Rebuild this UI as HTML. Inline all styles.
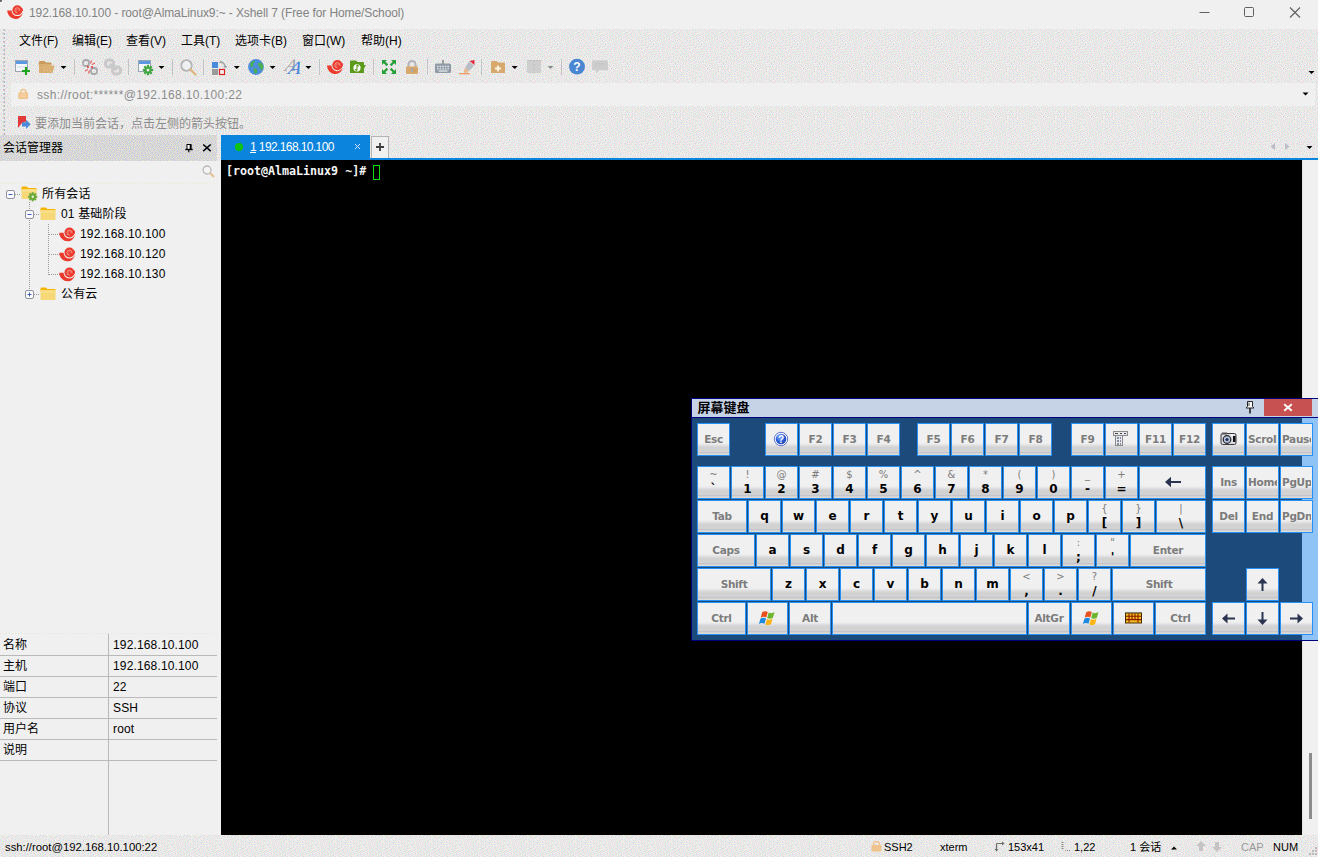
<!DOCTYPE html>
<html lang="zh-CN"><head><meta charset="utf-8"><title>Xshell 7</title>
<style>
*{box-sizing:border-box;margin:0;padding:0}
html,body{width:1318px;height:857px;overflow:hidden;background:#e9eaed}
body{position:relative;font-family:"Liberation Sans","Noto Sans CJK SC",sans-serif;font-size:12px;color:#000}
.abs{position:absolute}
.t{position:absolute;white-space:nowrap;line-height:1}

#titlebar{left:0;top:0;width:1318px;height:29px;background:#f0f0f0}
#title{left:29px;top:7px;font-size:12px;color:#838383;letter-spacing:-.1px}
.menu{top:35px;font-size:12px;color:#000}
#addr{left:11px;top:83px;width:1304px;height:23px;background:#f0f0f0}
#addrtext{left:37px;top:89px;font-size:12px;color:#8c8c8c;letter-spacing:.35px}
#hint{left:35px;top:117.500px;font-size:12px;color:#8c8c8c}

#smtitle{left:3px;top:142px;font-size:12px}
#smbody{left:0;top:161px;width:221px;height:674px;background:#f0f0f0}
.tree{font-size:12px;color:#000;letter-spacing:.15px}

.pl{background:#b9b9b9}
.pk{left:3px;font-size:12px}
.pv{left:113px;font-size:12px;letter-spacing:.15px}

#tab{left:221px;top:135px;width:149px;height:24px;background:#0b84dd}
#tabtxt{left:250px;top:141px;font-size:12px;color:#fff;letter-spacing:-.6px}
#tabline{left:221px;top:158px;width:1097px;height:2px;background:#0b84dd}
#plus{left:371px;top:136px;width:18px;height:22px;background:#f0f0f0;border:1px solid #b4b4b4;border-bottom:none}
#term{left:221px;top:160px;width:1081px;height:675px;background:#000}
#scroll{left:1302px;top:160px;width:16px;height:675px;background:#f0f0f0;border-left:1px solid #e2e2e2}
#prompt{left:226px;top:166.200px;font-family:"DejaVu Sans Mono","Liberation Mono",monospace;font-weight:bold;font-size:11.650px;color:#f6f6f6}
#cursor{left:373px;top:165px;width:7px;height:15px;border:1px solid #10de10}

.st{top:842px;font-size:11px;color:#000}

#kb{left:691px;top:398px;width:640px;height:243px;background:#1c4a7b;border:1px solid #00007c}
#kblight{left:1302px;top:418px;width:16px;height:222px;background:#8fc3f5}
#kbtitle{left:692px;top:399px;width:626px;height:18px;background:#c6d3e6}
#kbtline{left:692px;top:417px;width:626px;height:1px;background:#00007c}
#kbname{left:697.500px;top:401px;font-size:13px;font-weight:bold;color:#000;font-family:"Liberation Sans","Noto Sans CJK SC",sans-serif}
#kbclose{left:1264px;top:399px;width:48px;height:17px;background:#c75050}
.k{position:absolute;height:33px;border:1px solid #2590f6;background:linear-gradient(#f0f0f0 0,#f0f0f0 19px,#e7e7e9 20.500px,#dbdbdd 22px,#d2d2d2 23.500px,#d2d2d2 28px,#c4c4cc 28px,#c4c4cc 29px,#d2d2d2 29px,#d2d2d2 30px,#dedcd6 30px);font-family:"DejaVu Sans","Liberation Sans",sans-serif;text-align:center;overflow:hidden;white-space:nowrap}
.k b{position:absolute;left:0;right:0;top:0;height:31px;line-height:31px;font-size:12px;font-weight:bold;color:#000}
.k i{position:absolute;left:0;right:0;top:0;letter-spacing:-.3px;height:31px;line-height:31px;font-size:10.500px;font-weight:bold;font-style:normal;color:#7c7c7c}
.k i.l{text-align:left;left:1px;right:auto;width:29px;overflow:hidden}
.k s{position:absolute;left:0;right:0;top:1.5px;height:12px;line-height:12px;font-size:10px;text-decoration:none;color:#7c7c7c}
.k u{position:absolute;left:0;right:0;top:14.6px;height:14px;line-height:14px;font-size:12px;font-weight:bold;text-decoration:none;color:#000}
.k svg{position:absolute;left:0;top:0}
</style></head>
<body>
<svg class="abs" style="left:0;top:0" width="1318" height="857" shape-rendering="crispEdges">
<defs><pattern id="dz" width="48" height="48" patternUnits="userSpaceOnUse"><rect width="48" height="48" fill="#f0f0f0"/><path d="M5 0h1v1h-1zM11 0h1v1h-1zM17 0h1v1h-1zM30 0h1v1h-1zM21 1h1v1h-1zM37 1h1v1h-1zM46 1h1v1h-1zM20 2h1v1h-1zM29 2h1v1h-1zM42 2h1v1h-1zM38 3h1v1h-1zM28 4h1v1h-1zM39 5h1v1h-1zM43 5h1v1h-1zM8 7h1v1h-1zM1 8h1v1h-1zM10 8h1v1h-1zM14 8h1v1h-1zM17 8h1v1h-1zM36 8h1v1h-1zM7 9h1v1h-1zM23 9h1v1h-1zM42 9h1v1h-1zM9 10h1v1h-1zM25 10h1v1h-1zM27 10h1v1h-1zM16 11h1v1h-1zM41 11h1v1h-1zM21 12h1v1h-1zM39 12h1v1h-1zM16 13h1v1h-1zM19 13h1v1h-1zM28 13h1v1h-1zM31 13h1v1h-1zM37 13h1v1h-1zM2 14h1v1h-1zM46 14h1v1h-1zM3 15h1v1h-1zM38 15h1v1h-1zM1 16h1v1h-1zM5 16h1v1h-1zM43 16h1v1h-1zM8 17h1v1h-1zM23 17h1v1h-1zM33 17h1v1h-1zM37 17h1v1h-1zM4 18h1v1h-1zM17 19h1v1h-1zM40 19h1v1h-1zM35 20h1v1h-1zM39 20h1v1h-1zM37 21h1v1h-1zM46 21h1v1h-1zM11 22h1v1h-1zM13 22h1v1h-1zM17 22h1v1h-1zM29 22h1v1h-1zM43 22h1v1h-1zM15 23h1v1h-1zM33 23h1v1h-1zM46 23h1v1h-1zM35 24h1v1h-1zM37 25h1v1h-1zM12 26h1v1h-1zM43 26h1v1h-1zM1 27h1v1h-1zM9 27h1v1h-1zM38 27h1v1h-1zM46 27h1v1h-1zM5 28h1v1h-1zM11 28h1v1h-1zM30 28h1v1h-1zM34 28h1v1h-1zM20 29h1v1h-1zM28 29h1v1h-1zM17 30h1v1h-1zM23 30h1v1h-1zM41 30h1v1h-1zM15 31h1v1h-1zM2 32h1v1h-1zM23 32h1v1h-1zM0 33h1v1h-1zM31 33h1v1h-1zM36 33h1v1h-1zM9 34h1v1h-1zM16 34h1v1h-1zM33 34h1v1h-1zM20 35h1v1h-1zM31 35h1v1h-1zM45 35h1v1h-1zM36 36h1v1h-1zM31 37h1v1h-1zM40 37h1v1h-1zM27 38h1v1h-1zM45 38h1v1h-1zM7 39h1v1h-1zM5 40h1v1h-1zM15 40h1v1h-1zM26 40h1v1h-1zM33 40h1v1h-1zM42 40h1v1h-1zM0 41h1v1h-1zM13 41h1v1h-1zM24 41h1v1h-1zM37 41h1v1h-1zM20 44h1v1h-1zM29 44h1v1h-1zM5 45h1v1h-1zM8 45h1v1h-1zM3 46h1v1h-1zM14 46h1v1h-1zM28 46h1v1h-1zM34 46h1v1h-1zM41 46h1v1h-1zM44 46h1v1h-1zM1 47h1v1h-1zM23 47h1v1h-1z" fill="#c8d4ea"/><path d="M2 0h1v1h-1zM6 0h1v1h-1zM12 0h1v1h-1zM15 0h1v1h-1zM19 0h1v1h-1zM23 0h1v1h-1zM35 0h1v1h-1zM38 0h1v1h-1zM40 0h1v1h-1zM43 0h1v1h-1zM45 0h1v1h-1zM0 1h1v1h-1zM3 1h1v1h-1zM8 1h1v1h-1zM10 1h1v1h-1zM14 1h1v1h-1zM17 1h1v1h-1zM25 1h1v1h-1zM27 1h1v1h-1zM30 1h1v1h-1zM32 1h1v1h-1zM34 1h1v1h-1zM5 2h1v1h-1zM12 2h1v1h-1zM23 2h1v1h-1zM39 2h1v1h-1zM44 2h1v1h-1zM1 3h1v1h-1zM3 3h1v1h-1zM6 3h1v1h-1zM8 3h1v1h-1zM10 3h1v1h-1zM14 3h1v1h-1zM16 3h1v1h-1zM18 3h1v1h-1zM22 3h1v1h-1zM25 3h1v1h-1zM27 3h1v1h-1zM30 3h1v1h-1zM33 3h1v1h-1zM35 3h1v1h-1zM37 3h1v1h-1zM41 3h1v1h-1zM46 3h1v1h-1zM4 4h1v1h-1zM18 4h1v1h-1zM20 4h1v1h-1zM24 4h1v1h-1zM26 4h1v1h-1zM33 4h1v1h-1zM43 4h1v1h-1zM1 5h1v1h-1zM5 5h1v1h-1zM7 5h1v1h-1zM10 5h1v1h-1zM12 5h1v1h-1zM14 5h1v1h-1zM16 5h1v1h-1zM19 5h1v1h-1zM23 5h1v1h-1zM32 5h1v1h-1zM35 5h1v1h-1zM38 5h1v1h-1zM41 5h1v1h-1zM46 5h1v1h-1zM0 6h1v1h-1zM2 6h1v1h-1zM9 6h1v1h-1zM13 6h1v1h-1zM17 6h1v1h-1zM21 6h1v1h-1zM25 6h1v1h-1zM27 6h1v1h-1zM29 6h1v1h-1zM31 6h1v1h-1zM35 6h1v1h-1zM44 6h1v1h-1zM4 7h1v1h-1zM6 7h1v1h-1zM12 7h1v1h-1zM16 7h1v1h-1zM19 7h1v1h-1zM23 7h1v1h-1zM32 7h1v1h-1zM34 7h1v1h-1zM38 7h1v1h-1zM40 7h1v1h-1zM42 7h1v1h-1zM46 7h1v1h-1zM20 8h1v1h-1zM22 8h1v1h-1zM25 8h1v1h-1zM27 8h1v1h-1zM29 8h1v1h-1zM44 8h1v1h-1zM47 8h1v1h-1zM1 9h1v1h-1zM4 9h1v1h-1zM6 9h1v1h-1zM12 9h1v1h-1zM14 9h1v1h-1zM16 9h1v1h-1zM19 9h1v1h-1zM30 9h1v1h-1zM32 9h1v1h-1zM34 9h1v1h-1zM37 9h1v1h-1zM39 9h1v1h-1zM41 9h1v1h-1zM45 9h1v1h-1zM3 10h1v1h-1zM18 10h1v1h-1zM22 10h1v1h-1zM36 10h1v1h-1zM44 10h1v1h-1zM47 10h1v1h-1zM1 11h1v1h-1zM6 11h1v1h-1zM8 11h1v1h-1zM11 11h1v1h-1zM14 11h1v1h-1zM20 11h1v1h-1zM26 11h1v1h-1zM29 11h1v1h-1zM31 11h1v1h-1zM33 11h1v1h-1zM35 11h1v1h-1zM39 11h1v1h-1zM45 11h1v1h-1zM3 12h1v1h-1zM10 12h1v1h-1zM13 12h1v1h-1zM17 12h1v1h-1zM23 12h1v1h-1zM36 12h1v1h-1zM42 12h1v1h-1zM44 12h1v1h-1zM47 12h1v1h-1zM1 13h1v1h-1zM5 13h1v1h-1zM8 13h1v1h-1zM11 13h1v1h-1zM14 13h1v1h-1zM24 13h1v1h-1zM26 13h1v1h-1zM34 13h1v1h-1zM40 13h1v1h-1zM6 14h1v1h-1zM13 14h1v1h-1zM19 14h1v1h-1zM22 14h1v1h-1zM27 14h1v1h-1zM29 14h1v1h-1zM31 14h1v1h-1zM36 14h1v1h-1zM42 14h1v1h-1zM44 14h1v1h-1zM47 14h1v1h-1zM8 15h1v1h-1zM11 15h1v1h-1zM15 15h1v1h-1zM17 15h1v1h-1zM21 15h1v1h-1zM23 15h1v1h-1zM26 15h1v1h-1zM34 15h1v1h-1zM40 15h1v1h-1zM3 16h1v1h-1zM7 16h1v1h-1zM10 16h1v1h-1zM13 16h1v1h-1zM18 16h1v1h-1zM25 16h1v1h-1zM29 16h1v1h-1zM31 16h1v1h-1zM35 16h1v1h-1zM39 16h1v1h-1zM45 16h1v1h-1zM0 17h1v1h-1zM11 17h1v1h-1zM15 17h1v1h-1zM17 17h1v1h-1zM21 17h1v1h-1zM27 17h1v1h-1zM32 17h1v1h-1zM40 17h1v1h-1zM42 17h1v1h-1zM1 18h1v1h-1zM6 18h1v1h-1zM8 18h1v1h-1zM14 18h1v1h-1zM19 18h1v1h-1zM28 18h1v1h-1zM30 18h1v1h-1zM34 18h1v1h-1zM38 18h1v1h-1zM45 18h1v1h-1zM47 18h1v1h-1zM3 19h1v1h-1zM9 19h1v1h-1zM11 19h1v1h-1zM13 19h1v1h-1zM21 19h1v1h-1zM23 19h1v1h-1zM25 19h1v1h-1zM27 19h1v1h-1zM32 19h1v1h-1zM36 19h1v1h-1zM42 19h1v1h-1zM44 19h1v1h-1zM1 20h1v1h-1zM5 20h1v1h-1zM8 20h1v1h-1zM12 20h1v1h-1zM15 20h1v1h-1zM19 20h1v1h-1zM25 20h1v1h-1zM29 20h1v1h-1zM31 20h1v1h-1zM43 20h1v1h-1zM45 20h1v1h-1zM2 21h1v1h-1zM4 21h1v1h-1zM7 21h1v1h-1zM9 21h1v1h-1zM16 21h1v1h-1zM21 21h1v1h-1zM23 21h1v1h-1zM27 21h1v1h-1zM32 21h1v1h-1zM35 21h1v1h-1zM41 21h1v1h-1zM3 22h1v1h-1zM6 22h1v1h-1zM19 22h1v1h-1zM24 22h1v1h-1zM26 22h1v1h-1zM38 22h1v1h-1zM1 23h1v1h-1zM4 23h1v1h-1zM8 23h1v1h-1zM12 23h1v1h-1zM20 23h1v1h-1zM22 23h1v1h-1zM31 23h1v1h-1zM36 23h1v1h-1zM39 23h1v1h-1zM41 23h1v1h-1zM45 23h1v1h-1zM0 24h1v1h-1zM5 24h1v1h-1zM9 24h1v1h-1zM11 24h1v1h-1zM14 24h1v1h-1zM17 24h1v1h-1zM20 24h1v1h-1zM24 24h1v1h-1zM27 24h1v1h-1zM32 24h1v1h-1zM43 24h1v1h-1zM1 25h1v1h-1zM3 25h1v1h-1zM6 25h1v1h-1zM18 25h1v1h-1zM23 25h1v1h-1zM25 25h1v1h-1zM28 25h1v1h-1zM30 25h1v1h-1zM35 25h1v1h-1zM39 25h1v1h-1zM41 25h1v1h-1zM45 25h1v1h-1zM5 26h1v1h-1zM8 26h1v1h-1zM10 26h1v1h-1zM14 26h1v1h-1zM16 26h1v1h-1zM20 26h1v1h-1zM22 26h1v1h-1zM32 26h1v1h-1zM34 26h1v1h-1zM3 27h1v1h-1zM17 27h1v1h-1zM19 27h1v1h-1zM27 27h1v1h-1zM29 27h1v1h-1zM32 27h1v1h-1zM36 27h1v1h-1zM39 27h1v1h-1zM41 27h1v1h-1zM44 27h1v1h-1zM1 28h1v1h-1zM7 28h1v1h-1zM9 28h1v1h-1zM13 28h1v1h-1zM15 28h1v1h-1zM18 28h1v1h-1zM21 28h1v1h-1zM23 28h1v1h-1zM25 28h1v1h-1zM46 28h1v1h-1zM2 29h1v1h-1zM6 29h1v1h-1zM27 29h1v1h-1zM33 29h1v1h-1zM36 29h1v1h-1zM38 29h1v1h-1zM40 29h1v1h-1zM42 29h1v1h-1zM44 29h1v1h-1zM0 30h1v1h-1zM4 30h1v1h-1zM8 30h1v1h-1zM10 30h1v1h-1zM12 30h1v1h-1zM14 30h1v1h-1zM21 30h1v1h-1zM24 30h1v1h-1zM30 30h1v1h-1zM32 30h1v1h-1zM37 30h1v1h-1zM46 30h1v1h-1zM0 31h1v1h-1zM5 31h1v1h-1zM9 31h1v1h-1zM17 31h1v1h-1zM19 31h1v1h-1zM26 31h1v1h-1zM29 31h1v1h-1zM33 31h1v1h-1zM35 31h1v1h-1zM38 31h1v1h-1zM43 31h1v1h-1zM46 31h1v1h-1zM3 32h1v1h-1zM7 32h1v1h-1zM11 32h1v1h-1zM15 32h1v1h-1zM21 32h1v1h-1zM25 32h1v1h-1zM30 32h1v1h-1zM34 32h1v1h-1zM39 32h1v1h-1zM41 32h1v1h-1zM44 32h1v1h-1zM2 33h1v1h-1zM6 33h1v1h-1zM10 33h1v1h-1zM14 33h1v1h-1zM18 33h1v1h-1zM20 33h1v1h-1zM28 33h1v1h-1zM37 33h1v1h-1zM40 33h1v1h-1zM3 34h1v1h-1zM5 34h1v1h-1zM7 34h1v1h-1zM12 34h1v1h-1zM21 34h1v1h-1zM23 34h1v1h-1zM26 34h1v1h-1zM29 34h1v1h-1zM41 34h1v1h-1zM43 34h1v1h-1zM45 34h1v1h-1zM47 34h1v1h-1zM1 35h1v1h-1zM10 35h1v1h-1zM14 35h1v1h-1zM18 35h1v1h-1zM24 35h1v1h-1zM27 35h1v1h-1zM34 35h1v1h-1zM37 35h1v1h-1zM39 35h1v1h-1zM42 35h1v1h-1zM3 36h1v1h-1zM6 36h1v1h-1zM8 36h1v1h-1zM12 36h1v1h-1zM16 36h1v1h-1zM22 36h1v1h-1zM25 36h1v1h-1zM30 36h1v1h-1zM43 36h1v1h-1zM46 36h1v1h-1zM0 37h1v1h-1zM2 37h1v1h-1zM5 37h1v1h-1zM9 37h1v1h-1zM11 37h1v1h-1zM13 37h1v1h-1zM15 37h1v1h-1zM19 37h1v1h-1zM21 37h1v1h-1zM24 37h1v1h-1zM28 37h1v1h-1zM33 37h1v1h-1zM35 37h1v1h-1zM39 37h1v1h-1zM42 37h1v1h-1zM47 37h1v1h-1zM3 38h1v1h-1zM6 38h1v1h-1zM15 38h1v1h-1zM17 38h1v1h-1zM25 38h1v1h-1zM30 38h1v1h-1zM34 38h1v1h-1zM37 38h1v1h-1zM1 39h1v1h-1zM11 39h1v1h-1zM13 39h1v1h-1zM20 39h1v1h-1zM22 39h1v1h-1zM24 39h1v1h-1zM28 39h1v1h-1zM32 39h1v1h-1zM36 39h1v1h-1zM39 39h1v1h-1zM43 39h1v1h-1zM45 39h1v1h-1zM3 40h1v1h-1zM8 40h1v1h-1zM10 40h1v1h-1zM18 40h1v1h-1zM30 40h1v1h-1zM35 40h1v1h-1zM40 40h1v1h-1zM47 40h1v1h-1zM2 41h1v1h-1zM5 41h1v1h-1zM11 41h1v1h-1zM17 41h1v1h-1zM19 41h1v1h-1zM22 41h1v1h-1zM27 41h1v1h-1zM29 41h1v1h-1zM39 41h1v1h-1zM44 41h1v1h-1zM46 41h1v1h-1zM7 42h1v1h-1zM9 42h1v1h-1zM14 42h1v1h-1zM16 42h1v1h-1zM20 42h1v1h-1zM22 42h1v1h-1zM31 42h2v1h-2zM40 42h1v1h-1zM2 43h1v1h-1zM4 43h1v1h-1zM6 43h1v1h-1zM10 43h1v1h-1zM13 43h1v1h-1zM18 43h1v1h-1zM25 43h1v1h-1zM27 43h1v1h-1zM29 43h1v1h-1zM34 43h1v1h-1zM36 43h1v1h-1zM38 43h1v1h-1zM42 43h1v1h-1zM44 43h1v1h-1zM46 43h1v1h-1zM11 44h1v1h-1zM15 44h1v1h-1zM22 44h1v1h-1zM24 44h1v1h-1zM32 44h1v1h-1zM36 44h1v1h-1zM39 44h1v1h-1zM41 44h1v1h-1zM45 44h1v1h-1zM1 45h1v1h-1zM3 45h1v1h-1zM7 45h1v1h-1zM12 45h1v1h-1zM16 45h1v1h-1zM18 45h1v1h-1zM21 45h1v1h-1zM29 45h1v1h-1zM33 45h1v1h-1zM38 45h1v1h-1zM43 45h1v1h-1zM46 45h1v1h-1zM9 46h1v1h-1zM11 46h1v1h-1zM15 46h1v1h-1zM20 46h1v1h-1zM24 46h1v1h-1zM26 46h1v1h-1zM31 46h1v1h-1zM0 47h1v1h-1zM5 47h1v1h-1zM7 47h1v1h-1zM13 47h1v1h-1zM18 47h1v1h-1zM22 47h1v1h-1zM27 47h1v1h-1zM32 47h1v1h-1zM35 47h1v1h-1zM37 47h2v1h-2zM40 47h1v1h-1zM43 47h1v1h-1zM46 47h1v1h-1z" fill="#fad4e6"/><path d="M1 0h1v1h-1zM4 0h1v1h-1zM8 0h1v1h-1zM10 0h1v1h-1zM13 0h1v1h-1zM18 0h1v1h-1zM21 0h1v1h-1zM29 0h1v1h-1zM33 0h1v1h-1zM46 0h1v1h-1zM6 1h1v1h-1zM16 1h1v1h-1zM22 1h1v1h-1zM24 1h1v1h-1zM28 1h1v1h-1zM36 1h1v1h-1zM39 1h1v1h-1zM42 1h1v1h-1zM44 1h1v1h-1zM1 2h1v1h-1zM3 2h1v1h-1zM7 2h1v1h-1zM10 2h1v1h-1zM14 2h1v1h-1zM18 2h1v1h-1zM26 2h1v1h-1zM31 2h1v1h-1zM34 2h1v1h-1zM38 2h1v1h-1zM41 2h1v1h-1zM47 2h1v1h-1zM0 3h1v1h-1zM5 3h1v1h-1zM13 3h1v1h-1zM20 3h1v1h-1zM23 3h1v1h-1zM29 3h1v1h-1zM32 3h1v1h-1zM36 3h1v1h-1zM43 3h1v1h-1zM45 3h1v1h-1zM2 4h1v1h-1zM7 4h1v1h-1zM9 4h1v1h-1zM11 4h1v1h-1zM14 4h1v1h-1zM16 4h1v1h-1zM23 4h1v1h-1zM27 4h1v1h-1zM31 4h1v1h-1zM38 4h1v1h-1zM40 4h1v1h-1zM47 4h1v1h-1zM3 5h1v1h-1zM17 5h1v1h-1zM22 5h1v1h-1zM26 5h1v1h-1zM29 5h1v1h-1zM34 5h1v1h-1zM36 5h1v1h-1zM44 5h1v1h-1zM4 6h1v1h-1zM6 6h1v1h-1zM8 6h1v1h-1zM11 6h1v1h-1zM15 6h1v1h-1zM19 6h1v1h-1zM24 6h1v1h-1zM32 6h1v1h-1zM38 6h1v1h-1zM40 6h1v1h-1zM42 6h1v1h-1zM46 6h1v1h-1zM0 7h1v1h-1zM2 7h1v1h-1zM10 7h1v1h-1zM14 7h1v1h-1zM21 7h1v1h-1zM26 7h1v1h-1zM28 7h1v1h-1zM30 7h1v1h-1zM36 7h1v1h-1zM44 7h1v1h-1zM2 8h1v1h-1zM4 8h1v1h-1zM6 8h1v1h-1zM8 8h1v1h-1zM13 8h1v1h-1zM18 8h1v1h-1zM23 8h1v1h-1zM31 8h1v1h-1zM33 8h1v1h-1zM35 8h1v1h-1zM40 8h1v1h-1zM0 9h1v1h-1zM9 9h1v1h-1zM11 9h1v1h-1zM17 9h1v1h-1zM21 9h1v1h-1zM25 9h1v1h-1zM28 9h1v1h-1zM43 9h1v1h-1zM46 9h1v1h-1zM2 10h1v1h-1zM6 10h1v1h-1zM14 10h1v1h-1zM16 10h1v1h-1zM20 10h1v1h-1zM24 10h1v1h-1zM29 10h1v1h-1zM32 10h1v1h-1zM37 10h1v1h-1zM39 10h1v1h-1zM42 10h1v1h-1zM4 11h1v1h-1zM10 11h1v1h-1zM12 11h1v1h-1zM18 11h1v1h-1zM22 11h1v1h-1zM27 11h1v1h-1zM34 11h1v1h-1zM36 11h1v1h-1zM43 11h1v1h-1zM0 12h1v1h-1zM2 12h1v1h-1zM6 12h1v1h-1zM8 12h1v1h-1zM15 12h1v1h-1zM20 12h1v1h-1zM25 12h1v1h-1zM29 12h1v1h-1zM38 12h1v1h-1zM41 12h1v1h-1zM45 12h1v1h-1zM12 13h1v1h-1zM18 13h1v1h-1zM22 13h1v1h-1zM27 13h1v1h-1zM30 13h1v1h-1zM33 13h1v1h-1zM35 13h1v1h-1zM39 13h1v1h-1zM46 13h1v1h-1zM0 14h1v1h-1zM3 14h2v1h-2zM7 14h1v1h-1zM9 14h1v1h-1zM12 14h1v1h-1zM15 14h1v1h-1zM17 14h1v1h-1zM20 14h1v1h-1zM25 14h1v1h-1zM32 14h1v1h-1zM37 14h1v1h-1zM41 14h1v1h-1zM1 15h1v1h-1zM5 15h1v1h-1zM10 15h1v1h-1zM13 15h1v1h-1zM24 15h1v1h-1zM30 15h1v1h-1zM35 15h1v1h-1zM39 15h1v1h-1zM43 15h1v1h-1zM45 15h1v1h-1zM15 16h1v1h-1zM20 16h1v1h-1zM22 16h1v1h-1zM27 16h1v1h-1zM33 16h1v1h-1zM37 16h1v1h-1zM41 16h1v1h-1zM47 16h1v1h-1zM2 17h1v1h-1zM4 17h1v1h-1zM6 17h1v1h-1zM9 17h1v1h-1zM13 17h1v1h-1zM18 17h1v1h-1zM25 17h1v1h-1zM29 17h1v1h-1zM31 17h1v1h-1zM35 17h1v1h-1zM44 17h1v1h-1zM46 17h1v1h-1zM10 18h1v1h-1zM12 18h1v1h-1zM16 18h1v1h-1zM20 18h1v1h-1zM22 18h1v1h-1zM24 18h1v1h-1zM26 18h1v1h-1zM33 18h1v1h-1zM37 18h1v1h-1zM40 18h1v1h-1zM43 18h1v1h-1zM1 19h1v1h-1zM4 19h1v1h-1zM7 19h1v1h-1zM15 19h1v1h-1zM18 19h1v1h-1zM30 19h1v1h-1zM38 19h1v1h-1zM46 19h1v1h-1zM0 20h1v1h-1zM3 20h1v1h-1zM6 20h1v1h-1zM10 20h1v1h-1zM17 20h1v1h-1zM20 20h1v1h-1zM22 20h1v1h-1zM27 20h1v1h-1zM33 20h1v1h-1zM36 20h1v1h-1zM41 20h1v1h-1zM47 20h1v1h-1zM11 21h1v1h-1zM13 21h2v1h-2zM18 21h1v1h-1zM24 21h2v1h-2zM29 21h1v1h-1zM31 21h1v1h-1zM34 21h1v1h-1zM39 21h1v1h-1zM43 21h1v1h-1zM45 21h1v1h-1zM1 22h1v1h-1zM5 22h1v1h-1zM8 22h1v1h-1zM16 22h1v1h-1zM21 22h1v1h-1zM28 22h1v1h-1zM36 22h1v1h-1zM40 22h1v1h-1zM47 22h1v1h-1zM6 23h1v1h-1zM10 23h1v1h-1zM14 23h1v1h-1zM19 23h1v1h-1zM23 23h1v1h-1zM27 23h1v1h-1zM32 23h1v1h-1zM34 23h1v1h-1zM38 23h1v1h-1zM42 23h1v1h-1zM44 23h1v1h-1zM2 24h1v1h-1zM16 24h1v1h-1zM18 24h1v1h-1zM22 24h1v1h-1zM25 24h1v1h-1zM29 24h1v1h-1zM36 24h1v1h-1zM40 24h1v1h-1zM45 24h1v1h-1zM47 24h1v1h-1zM4 25h1v1h-1zM7 25h1v1h-1zM9 25h1v1h-1zM11 25h1v1h-1zM13 25h1v1h-1zM15 25h1v1h-1zM21 25h1v1h-1zM27 25h1v1h-1zM31 25h1v1h-1zM33 25h1v1h-1zM38 25h1v1h-1zM43 25h1v1h-1zM0 26h1v1h-1zM2 26h1v1h-1zM13 26h1v1h-1zM18 26h1v1h-1zM24 26h1v1h-1zM29 26h1v1h-1zM36 26h1v1h-1zM40 26h1v1h-1zM42 26h1v1h-1zM45 26h1v1h-1zM47 26h1v1h-1zM5 27h1v1h-1zM7 27h1v1h-1zM10 27h1v1h-1zM12 27h1v1h-1zM20 27h1v1h-1zM22 27h1v1h-1zM25 27h1v1h-1zM31 27h1v1h-1zM34 27h1v1h-1zM3 28h1v1h-1zM16 28h1v1h-1zM26 28h1v1h-1zM28 28h1v1h-1zM33 28h1v1h-1zM37 28h1v1h-1zM39 28h1v1h-1zM41 28h1v1h-1zM43 28h1v1h-1zM47 28h1v1h-1zM1 29h1v1h-1zM5 29h1v1h-1zM8 29h1v1h-1zM10 29h1v1h-1zM12 29h1v1h-1zM14 29h1v1h-1zM19 29h1v1h-1zM21 29h1v1h-1zM24 29h1v1h-1zM29 29h1v1h-1zM31 29h1v1h-1zM35 29h1v1h-1zM45 29h1v1h-1zM3 30h1v1h-1zM6 30h1v1h-1zM16 30h1v1h-1zM18 30h1v1h-1zM22 30h1v1h-1zM26 30h1v1h-1zM34 30h1v1h-1zM39 30h1v1h-1zM42 30h1v1h-1zM47 30h1v1h-1zM2 31h1v1h-1zM7 31h1v1h-1zM11 31h1v1h-1zM14 31h1v1h-1zM23 31h1v1h-1zM28 31h1v1h-1zM31 31h1v1h-1zM36 31h1v1h-1zM40 31h1v1h-1zM45 31h1v1h-1zM1 32h1v1h-1zM4 32h1v1h-1zM9 32h1v1h-1zM13 32h1v1h-1zM16 32h1v1h-1zM19 32h1v1h-1zM24 32h1v1h-1zM32 32h1v1h-1zM37 32h1v1h-1zM42 32h1v1h-1zM47 32h1v1h-1zM8 33h1v1h-1zM12 33h1v1h-1zM21 33h1v1h-1zM23 33h1v1h-1zM27 33h1v1h-1zM29 33h1v1h-1zM33 33h1v1h-1zM38 33h1v1h-1zM43 33h1v1h-1zM45 33h1v1h-1zM1 34h1v1h-1zM4 34h1v1h-1zM10 34h1v1h-1zM15 34h1v1h-1zM17 34h1v1h-1zM19 34h1v1h-1zM25 34h1v1h-1zM31 34h1v1h-1zM35 34h1v1h-1zM39 34h1v1h-1zM2 35h1v1h-1zM6 35h1v1h-1zM8 35h1v1h-1zM12 35h1v1h-1zM15 35h1v1h-1zM22 35h1v1h-1zM25 35h1v1h-1zM29 35h1v1h-1zM36 35h1v1h-1zM40 35h1v1h-1zM44 35h1v1h-1zM47 35h1v1h-1zM1 36h1v1h-1zM4 36h1v1h-1zM10 36h1v1h-1zM14 36h1v1h-1zM18 36h1v1h-1zM20 36h1v1h-1zM26 36h1v1h-1zM28 36h1v1h-1zM32 36h1v1h-1zM34 36h1v1h-1zM38 36h1v1h-1zM41 36h1v1h-1zM7 37h1v1h-1zM17 37h1v1h-1zM23 37h1v1h-1zM30 37h1v1h-1zM37 37h1v1h-1zM45 37h1v1h-1zM1 38h1v1h-1zM4 38h1v1h-1zM9 38h1v1h-1zM11 38h1v1h-1zM13 38h1v1h-1zM19 38h1v1h-1zM22 38h1v1h-1zM26 38h1v1h-1zM35 38h1v1h-1zM40 38h1v1h-1zM42 38h1v1h-1zM44 38h1v1h-1zM2 39h1v1h-1zM5 39h1v1h-1zM8 39h1v1h-1zM15 39h1v1h-1zM18 39h1v1h-1zM30 39h1v1h-1zM34 39h1v1h-1zM38 39h1v1h-1zM41 39h1v1h-1zM47 39h1v1h-1zM6 40h1v1h-1zM12 40h1v1h-1zM16 40h1v1h-1zM20 40h1v1h-1zM23 40h1v1h-1zM25 40h1v1h-1zM28 40h1v1h-1zM32 40h1v1h-1zM38 40h1v1h-1zM44 40h1v1h-1zM1 41h1v1h-1zM4 41h1v1h-1zM8 41h1v1h-1zM10 41h1v1h-1zM15 41h1v1h-1zM21 41h1v1h-1zM30 41h1v1h-1zM33 41h1v1h-1zM36 41h1v1h-1zM41 41h1v1h-1zM43 41h1v1h-1zM3 42h1v1h-1zM12 42h1v1h-1zM18 42h1v1h-1zM24 42h1v1h-1zM26 42h1v1h-1zM34 42h1v1h-1zM38 42h1v1h-1zM45 42h1v1h-1zM47 42h1v1h-1zM0 43h1v1h-1zM8 43h1v1h-1zM11 43h1v1h-1zM16 43h1v1h-1zM21 43h1v1h-1zM23 43h1v1h-1zM28 43h1v1h-1zM31 43h1v1h-1zM40 43h1v1h-1zM43 43h1v1h-1zM1 44h1v1h-1zM3 44h1v1h-1zM5 44h1v1h-1zM9 44h1v1h-1zM13 44h1v1h-1zM17 44h1v1h-1zM19 44h1v1h-1zM25 44h1v1h-1zM30 44h1v1h-1zM34 44h1v1h-1zM37 44h1v1h-1zM10 45h1v1h-1zM14 45h1v1h-1zM20 45h1v1h-1zM23 45h1v1h-1zM27 45h1v1h-1zM31 45h1v1h-1zM35 45h1v1h-1zM40 45h1v1h-1zM42 45h1v1h-1zM44 45h1v1h-1zM47 45h1v1h-1zM1 46h1v1h-1zM4 46h1v1h-1zM6 46h1v1h-1zM8 46h1v1h-1zM13 46h1v1h-1zM17 46h1v1h-1zM22 46h1v1h-1zM29 46h1v1h-1zM33 46h1v1h-1zM36 46h1v1h-1zM39 46h1v1h-1zM46 46h1v1h-1zM2 47h1v1h-1zM10 47h1v1h-1zM16 47h1v1h-1zM20 47h1v1h-1zM25 47h1v1h-1zM44 47h1v1h-1z" fill="#f0eed2"/><path d="M0 0h1v1h-1zM3 0h1v1h-1zM7 0h1v1h-1zM14 0h1v1h-1zM28 0h1v1h-1zM32 0h1v1h-1zM34 0h1v1h-1zM39 0h1v1h-1zM42 0h1v1h-1zM44 0h1v1h-1zM2 1h1v1h-1zM9 1h1v1h-1zM12 1h1v1h-1zM15 1h1v1h-1zM18 1h1v1h-1zM23 1h1v1h-1zM26 1h1v1h-1zM31 1h1v1h-1zM40 1h1v1h-1zM0 2h1v1h-1zM4 2h1v1h-1zM6 2h1v1h-1zM8 2h1v1h-1zM13 2h1v1h-1zM24 2h1v1h-1zM27 2h1v1h-1zM33 2h1v1h-1zM35 2h1v1h-1zM45 2h1v1h-1zM2 3h1v1h-1zM4 3h1v1h-1zM9 3h1v1h-1zM11 3h1v1h-1zM15 3h1v1h-1zM17 3h1v1h-1zM21 3h1v1h-1zM24 3h1v1h-1zM26 3h1v1h-1zM31 3h1v1h-1zM34 3h1v1h-1zM40 3h1v1h-1zM44 3h1v1h-1zM1 4h1v1h-1zM5 4h2v1h-2zM10 4h1v1h-1zM13 4h1v1h-1zM17 4h1v1h-1zM19 4h1v1h-1zM22 4h1v1h-1zM25 4h1v1h-1zM32 4h1v1h-1zM34 4h1v1h-1zM36 4h1v1h-1zM41 4h1v1h-1zM46 4h1v1h-1zM0 5h1v1h-1zM4 5h1v1h-1zM8 5h1v1h-1zM11 5h1v1h-1zM15 5h1v1h-1zM18 5h1v1h-1zM20 5h1v1h-1zM24 5h1v1h-1zM27 5h1v1h-1zM31 5h1v1h-1zM33 5h1v1h-1zM45 5h1v1h-1zM1 6h1v1h-1zM3 6h1v1h-1zM7 6h1v1h-1zM10 6h1v1h-1zM12 6h1v1h-1zM14 6h1v1h-1zM16 6h1v1h-1zM22 6h1v1h-1zM26 6h1v1h-1zM28 6h1v1h-1zM30 6h1v1h-1zM34 6h1v1h-1zM36 6h1v1h-1zM41 6h1v1h-1zM45 6h1v1h-1zM47 6h1v1h-1zM3 7h1v1h-1zM5 7h1v1h-1zM15 7h1v1h-1zM18 7h1v1h-1zM20 7h1v1h-1zM22 7h1v1h-1zM25 7h1v1h-1zM31 7h1v1h-1zM33 7h1v1h-1zM37 7h1v1h-1zM39 7h1v1h-1zM43 7h1v1h-1zM5 8h1v1h-1zM12 8h1v1h-1zM21 8h1v1h-1zM24 8h1v1h-1zM26 8h1v1h-1zM28 8h1v1h-1zM30 8h1v1h-1zM34 8h1v1h-1zM39 8h1v1h-1zM41 8h1v1h-1zM45 8h2v1h-2zM3 9h1v1h-1zM15 9h1v1h-1zM20 9h1v1h-1zM29 9h1v1h-1zM31 9h1v1h-1zM33 9h1v1h-1zM38 9h1v1h-1zM44 9h1v1h-1zM47 9h1v1h-1zM1 10h1v1h-1zM4 10h1v1h-1zM11 10h1v1h-1zM13 10h1v1h-1zM17 10h1v1h-1zM19 10h1v1h-1zM33 10h1v1h-1zM35 10h1v1h-1zM38 10h1v1h-1zM45 10h1v1h-1zM0 11h1v1h-1zM3 11h1v1h-1zM5 11h1v1h-1zM7 11h1v1h-1zM13 11h1v1h-1zM21 11h1v1h-1zM23 11h1v1h-1zM30 11h1v1h-1zM32 11h1v1h-1zM37 11h1v1h-1zM44 11h1v1h-1zM46 11h1v1h-1zM1 12h1v1h-1zM7 12h1v1h-1zM9 12h1v1h-1zM11 12h1v1h-1zM14 12h1v1h-1zM18 12h1v1h-1zM24 12h1v1h-1zM26 12h1v1h-1zM30 12h1v1h-1zM33 12h1v1h-1zM35 12h1v1h-1zM43 12h1v1h-1zM0 13h1v1h-1zM4 13h1v1h-1zM6 13h1v1h-1zM10 13h1v1h-1zM13 13h1v1h-1zM23 13h1v1h-1zM41 13h1v1h-1zM45 13h1v1h-1zM47 13h1v1h-1zM5 14h1v1h-1zM8 14h1v1h-1zM11 14h1v1h-1zM14 14h1v1h-1zM18 14h1v1h-1zM21 14h1v1h-1zM24 14h1v1h-1zM26 14h1v1h-1zM30 14h1v1h-1zM33 14h1v1h-1zM35 14h1v1h-1zM39 14h1v1h-1zM43 14h1v1h-1zM7 15h1v1h-1zM9 15h1v1h-1zM12 15h1v1h-1zM16 15h1v1h-1zM22 15h1v1h-1zM27 15h1v1h-1zM29 15h1v1h-1zM36 15h1v1h-1zM41 15h1v1h-1zM44 15h1v1h-1zM11 16h1v1h-1zM14 16h1v1h-1zM17 16h1v1h-1zM19 16h1v1h-1zM21 16h1v1h-1zM24 16h1v1h-1zM26 16h1v1h-1zM30 16h1v1h-1zM32 16h1v1h-1zM34 16h1v1h-1zM40 16h1v1h-1zM46 16h1v1h-1zM10 17h1v1h-1zM14 17h1v1h-1zM16 17h1v1h-1zM19 17h1v1h-1zM26 17h1v1h-1zM30 17h1v1h-1zM39 17h1v1h-1zM41 17h1v1h-1zM45 17h1v1h-1zM0 18h1v1h-1zM2 18h1v1h-1zM7 18h1v1h-1zM11 18h1v1h-1zM13 18h1v1h-1zM15 18h1v1h-1zM21 18h1v1h-1zM27 18h1v1h-1zM29 18h1v1h-1zM35 18h1v1h-1zM42 18h1v1h-1zM46 18h1v1h-1zM2 19h1v1h-1zM5 19h1v1h-1zM8 19h1v1h-1zM10 19h1v1h-1zM19 19h1v1h-1zM22 19h1v1h-1zM24 19h1v1h-1zM26 19h1v1h-1zM31 19h1v1h-1zM34 19h1v1h-1zM37 19h1v1h-1zM43 19h1v1h-1zM45 19h1v1h-1zM2 20h1v1h-1zM7 20h1v1h-1zM11 20h1v1h-1zM13 20h1v1h-1zM16 20h1v1h-1zM21 20h1v1h-1zM24 20h1v1h-1zM26 20h1v1h-1zM28 20h1v1h-1zM30 20h1v1h-1zM32 20h1v1h-1zM42 20h1v1h-1zM44 20h1v1h-1zM0 21h1v1h-1zM3 21h1v1h-1zM6 21h1v1h-1zM8 21h1v1h-1zM10 21h1v1h-1zM15 21h1v1h-1zM19 21h1v1h-1zM22 21h1v1h-1zM26 21h1v1h-1zM33 21h1v1h-1zM2 22h1v1h-1zM4 22h1v1h-1zM7 22h1v1h-1zM20 22h1v1h-1zM23 22h1v1h-1zM25 22h1v1h-1zM27 22h1v1h-1zM31 22h1v1h-1zM35 22h1v1h-1zM39 22h1v1h-1zM41 22h1v1h-1zM0 23h1v1h-1zM5 23h1v1h-1zM18 23h1v1h-1zM21 23h1v1h-1zM37 23h1v1h-1zM40 23h1v1h-1zM1 24h1v1h-1zM3 24h1v1h-1zM6 24h1v1h-1zM8 24h1v1h-1zM10 24h1v1h-1zM12 24h1v1h-1zM19 24h1v1h-1zM21 24h1v1h-1zM23 24h1v1h-1zM26 24h1v1h-1zM28 24h1v1h-1zM31 24h1v1h-1zM39 24h1v1h-1zM42 24h1v1h-1zM44 24h1v1h-1zM0 25h1v1h-1zM2 25h1v1h-1zM5 25h1v1h-1zM10 25h1v1h-1zM14 25h1v1h-1zM17 25h1v1h-1zM24 25h1v1h-1zM26 25h1v1h-1zM29 25h1v1h-1zM32 25h1v1h-1zM40 25h1v1h-1zM46 25h1v1h-1zM3 26h1v1h-1zM6 26h2v1h-2zM9 26h1v1h-1zM15 26h1v1h-1zM17 26h1v1h-1zM19 26h1v1h-1zM21 26h1v1h-1zM23 26h1v1h-1zM30 26h1v1h-1zM33 26h1v1h-1zM35 26h1v1h-1zM41 26h1v1h-1zM4 27h1v1h-1zM15 27h1v1h-1zM18 27h1v1h-1zM26 27h1v1h-1zM28 27h1v1h-1zM33 27h1v1h-1zM40 27h1v1h-1zM2 28h1v1h-1zM8 28h1v1h-1zM14 28h1v1h-1zM17 28h1v1h-1zM19 28h1v1h-1zM22 28h1v1h-1zM24 28h1v1h-1zM27 28h1v1h-1zM36 28h1v1h-1zM40 28h1v1h-1zM42 28h1v1h-1zM44 28h1v1h-1zM0 29h1v1h-1zM3 29h1v1h-1zM7 29h1v1h-1zM15 29h1v1h-1zM22 29h1v1h-1zM25 29h1v1h-1zM32 29h1v1h-1zM39 29h1v1h-1zM43 29h1v1h-1zM46 29h1v1h-1zM1 30h1v1h-1zM5 30h1v1h-1zM9 30h1v1h-1zM11 30h1v1h-1zM13 30h1v1h-1zM31 30h1v1h-1zM33 30h1v1h-1zM36 30h1v1h-1zM38 30h1v1h-1zM45 30h1v1h-1zM1 31h1v1h-1zM4 31h1v1h-1zM6 31h1v1h-1zM8 31h1v1h-1zM12 31h1v1h-1zM21 31h1v1h-1zM25 31h1v1h-1zM27 31h1v1h-1zM30 31h1v1h-1zM34 31h1v1h-1zM37 31h1v1h-1zM42 31h1v1h-1zM44 31h1v1h-1zM47 31h1v1h-1zM8 32h1v1h-1zM10 32h1v1h-1zM14 32h1v1h-1zM17 32h1v1h-1zM20 32h1v1h-1zM26 32h1v1h-1zM29 32h1v1h-1zM33 32h1v1h-1zM35 32h1v1h-1zM38 32h1v1h-1zM40 32h1v1h-1zM43 32h1v1h-1zM46 32h1v1h-1zM3 33h1v1h-1zM5 33h1v1h-1zM7 33h1v1h-1zM11 33h1v1h-1zM13 33h1v1h-1zM17 33h1v1h-1zM19 33h1v1h-1zM39 33h1v1h-1zM41 33h1v1h-1zM44 33h1v1h-1zM2 34h1v1h-1zM6 34h1v1h-1zM14 34h1v1h-1zM20 34h1v1h-1zM22 34h1v1h-1zM24 34h1v1h-1zM27 34h2v1h-2zM37 34h1v1h-1zM42 34h1v1h-1zM46 34h1v1h-1zM0 35h1v1h-1zM3 35h1v1h-1zM5 35h1v1h-1zM7 35h1v1h-1zM11 35h1v1h-1zM13 35h1v1h-1zM23 35h1v1h-1zM26 35h1v1h-1zM28 35h1v1h-1zM35 35h1v1h-1zM38 35h1v1h-1zM41 35h1v1h-1zM2 36h1v1h-1zM7 36h1v1h-1zM9 36h1v1h-1zM13 36h1v1h-1zM15 36h1v1h-1zM17 36h1v1h-1zM24 36h1v1h-1zM29 36h1v1h-1zM33 36h1v1h-1zM39 36h1v1h-1zM42 36h1v1h-1zM44 36h1v1h-1zM47 36h1v1h-1zM1 37h1v1h-1zM4 37h1v1h-1zM6 37h1v1h-1zM10 37h1v1h-1zM12 37h1v1h-1zM14 37h1v1h-1zM18 37h1v1h-1zM20 37h1v1h-1zM22 37h1v1h-1zM25 37h1v1h-1zM27 37h1v1h-1zM34 37h1v1h-1zM43 37h1v1h-1zM2 38h1v1h-1zM5 38h1v1h-1zM8 38h1v1h-1zM14 38h1v1h-1zM16 38h1v1h-1zM18 38h1v1h-1zM20 38h1v1h-1zM24 38h1v1h-1zM29 38h1v1h-1zM33 38h1v1h-1zM36 38h1v1h-1zM38 38h1v1h-1zM47 38h1v1h-1zM0 39h1v1h-1zM3 39h1v1h-1zM10 39h1v1h-1zM12 39h1v1h-1zM14 39h1v1h-1zM21 39h1v1h-1zM23 39h1v1h-1zM25 39h1v1h-1zM31 39h1v1h-1zM35 39h1v1h-1zM37 39h1v1h-1zM40 39h1v1h-1zM42 39h1v1h-1zM44 39h1v1h-1zM2 40h1v1h-1zM9 40h1v1h-1zM11 40h1v1h-1zM17 40h1v1h-1zM19 40h1v1h-1zM22 40h1v1h-1zM29 40h1v1h-1zM39 40h1v1h-1zM46 40h1v1h-1zM3 41h1v1h-1zM18 41h1v1h-1zM28 41h1v1h-1zM31 41h1v1h-1zM35 41h1v1h-1zM40 41h1v1h-1zM45 41h1v1h-1zM4 42h1v1h-1zM6 42h1v1h-1zM8 42h1v1h-1zM10 42h1v1h-1zM15 42h1v1h-1zM17 42h1v1h-1zM19 42h1v1h-1zM21 42h1v1h-1zM27 42h1v1h-1zM30 42h1v1h-1zM33 42h1v1h-1zM39 42h1v1h-1zM41 42h1v1h-1zM43 42h1v1h-1zM46 42h1v1h-1zM1 43h1v1h-1zM3 43h1v1h-1zM9 43h1v1h-1zM12 43h1v1h-1zM14 43h1v1h-1zM17 43h1v1h-1zM22 43h1v1h-1zM24 43h1v1h-1zM26 43h1v1h-1zM32 43h1v1h-1zM35 43h1v1h-1zM37 43h1v1h-1zM41 43h1v1h-1zM45 43h1v1h-1zM4 44h1v1h-1zM6 44h1v1h-1zM10 44h1v1h-1zM12 44h1v1h-1zM16 44h1v1h-1zM27 44h1v1h-1zM33 44h1v1h-1zM35 44h1v1h-1zM38 44h1v1h-1zM40 44h1v1h-1zM42 44h1v1h-1zM44 44h1v1h-1zM47 44h1v1h-1zM0 45h1v1h-1zM2 45h1v1h-1zM11 45h1v1h-1zM15 45h1v1h-1zM17 45h1v1h-1zM19 45h1v1h-1zM22 45h1v1h-1zM24 45h1v1h-1zM26 45h1v1h-1zM30 45h1v1h-1zM32 45h1v1h-1zM37 45h1v1h-1zM39 45h1v1h-1zM45 45h1v1h-1zM7 46h1v1h-1zM12 46h1v1h-1zM21 46h1v1h-1zM25 46h1v1h-1zM32 46h1v1h-1zM38 46h1v1h-1zM47 46h1v1h-1zM9 47h1v1h-1zM11 47h1v1h-1zM17 47h1v1h-1zM19 47h1v1h-1zM26 47h1v1h-1zM31 47h1v1h-1zM36 47h1v1h-1zM39 47h1v1h-1zM45 47h1v1h-1z" fill="#d2f0f0"/></pattern><pattern id="dz2" width="48" height="48" patternUnits="userSpaceOnUse"><rect width="48" height="48" fill="#c8d0e2"/><path d="M0 0h1v1h-1zM47 1h1v1h-1zM0 2h1v1h-1zM47 3h1v1h-1zM0 4h1v1h-1zM46 5h1v1h-1zM0 6h1v1h-1zM47 7h1v1h-1zM0 8h1v1h-1zM0 13h1v1h-1zM0 14h1v1h-1zM47 15h1v1h-1zM0 16h1v1h-1zM0 18h1v1h-1zM47 19h1v1h-1zM1 20h1v1h-1zM47 23h1v1h-1zM0 24h1v1h-1zM47 25h1v1h-1zM47 29h1v1h-1zM0 30h1v1h-1zM47 31h1v1h-1zM1 32h1v1h-1zM0 34h1v1h-1zM47 35h1v1h-1zM0 36h1v1h-1zM47 39h1v1h-1zM0 43h1v1h-1zM0 44h1v1h-1zM47 45h1v1h-1zM47 47h1v1h-1z" fill="#d2d2d2"/><path d="M4 0h1v1h-1zM8 0h1v1h-1zM37 0h1v1h-1zM24 1h1v1h-1zM34 1h1v1h-1zM5 2h1v1h-1zM13 2h1v1h-1zM28 2h1v1h-1zM40 2h1v1h-1zM1 3h1v1h-1zM15 3h1v1h-1zM18 3h1v1h-1zM38 3h1v1h-1zM45 3h1v1h-1zM22 4h1v1h-1zM26 4h1v1h-1zM30 4h1v1h-1zM41 5h1v1h-1zM5 6h1v1h-1zM9 6h1v1h-1zM19 6h1v1h-1zM34 6h1v1h-1zM39 7h1v1h-1zM1 8h1v1h-1zM17 8h1v1h-1zM23 8h1v1h-1zM27 8h1v1h-1zM42 8h1v1h-1zM31 9h1v1h-1zM35 9h1v1h-1zM46 9h1v1h-1zM6 10h1v1h-1zM13 10h1v1h-1zM21 10h1v1h-1zM45 11h1v1h-1zM39 12h1v1h-1zM42 12h1v1h-1zM2 13h1v1h-1zM17 13h1v1h-1zM10 14h1v1h-1zM16 14h1v1h-1zM24 14h1v1h-1zM34 14h1v1h-1zM0 15h1v1h-1zM30 15h1v1h-1zM8 16h1v1h-1zM27 16h1v1h-1zM6 17h1v1h-1zM13 17h1v1h-1zM31 18h1v1h-1zM37 18h1v1h-1zM39 18h1v1h-1zM47 18h1v1h-1zM2 19h1v1h-1zM9 19h1v1h-1zM20 19h1v1h-1zM43 19h1v1h-1zM5 20h1v1h-1zM16 20h1v1h-1zM33 20h1v1h-1zM12 21h1v1h-1zM22 21h1v1h-1zM29 21h1v1h-1zM35 21h1v1h-1zM1 22h1v1h-1zM46 22h1v1h-1zM10 23h1v1h-1zM23 23h1v1h-1zM43 23h1v1h-1zM8 24h1v1h-1zM16 24h1v1h-1zM19 24h1v1h-1zM38 24h1v1h-1zM5 25h1v1h-1zM28 25h1v1h-1zM1 26h1v1h-1zM14 26h1v1h-1zM24 26h1v1h-1zM33 26h1v1h-1zM36 26h1v1h-1zM21 27h1v1h-1zM39 27h1v1h-1zM46 27h1v1h-1zM1 28h1v1h-1zM9 28h1v1h-1zM27 29h1v1h-1zM31 29h1v1h-1zM35 29h1v1h-1zM16 30h1v1h-1zM19 30h1v1h-1zM37 31h1v1h-1zM42 31h1v1h-1zM9 32h1v1h-1zM13 32h1v1h-1zM25 32h1v1h-1zM31 32h1v1h-1zM6 33h1v1h-1zM21 33h1v1h-1zM40 33h1v1h-1zM46 33h1v1h-1zM2 34h1v1h-1zM29 34h1v1h-1zM34 34h1v1h-1zM10 35h1v1h-1zM43 35h1v1h-1zM45 35h1v1h-1zM1 36h1v1h-1zM15 36h1v1h-1zM23 36h1v1h-1zM6 37h1v1h-1zM20 37h1v1h-1zM26 37h1v1h-1zM31 37h1v1h-1zM47 37h1v1h-1zM11 39h1v1h-1zM23 39h1v1h-1zM28 39h1v1h-1zM34 39h1v1h-1zM1 40h1v1h-1zM7 40h1v1h-1zM32 40h1v1h-1zM37 40h1v1h-1zM46 41h1v1h-1zM13 42h1v1h-1zM16 42h1v1h-1zM21 42h1v1h-1zM2 43h1v1h-1zM26 43h1v1h-1zM32 43h1v1h-1zM40 43h1v1h-1zM44 43h1v1h-1zM7 44h1v1h-1zM11 44h1v1h-1zM47 44h1v1h-1zM36 45h1v1h-1zM45 45h1v1h-1zM2 46h1v1h-1zM20 46h1v1h-1zM27 46h1v1h-1zM42 46h1v1h-1zM5 47h1v1h-1zM13 47h1v1h-1zM18 47h1v1h-1zM24 47h1v1h-1zM31 47h1v1h-1z" fill="#f0ccd4"/><path d="M2 0h1v1h-1zM6 0h1v1h-1zM10 0h1v1h-1zM13 0h1v1h-1zM15 0h1v1h-1zM18 0h1v1h-1zM23 0h1v1h-1zM26 0h1v1h-1zM29 0h1v1h-1zM32 0h1v1h-1zM35 0h1v1h-1zM39 0h1v1h-1zM41 0h1v1h-1zM43 0h1v1h-1zM45 0h1v1h-1zM1 1h1v1h-1zM4 1h1v1h-1zM6 1h1v1h-1zM9 1h1v1h-1zM12 1h1v1h-1zM17 1h1v1h-1zM20 1h1v1h-1zM22 1h1v1h-1zM26 1h1v1h-1zM28 1h1v1h-1zM30 1h1v1h-1zM33 1h1v1h-1zM36 1h1v1h-1zM39 1h1v1h-1zM42 1h1v1h-1zM44 1h1v1h-1zM2 2h1v1h-1zM7 2h1v1h-1zM10 2h1v1h-1zM14 2h1v1h-1zM16 2h1v1h-1zM18 2h1v1h-1zM20 2h1v1h-1zM24 2h1v1h-1zM31 2h1v1h-1zM35 2h1v1h-1zM38 2h1v1h-1zM44 2h1v1h-1zM46 2h1v1h-1zM3 3h1v1h-1zM5 3h1v1h-1zM9 3h1v1h-1zM12 3h1v1h-1zM21 3h1v1h-1zM23 3h1v1h-1zM25 3h1v1h-1zM27 3h1v1h-1zM29 3h1v1h-1zM31 3h1v1h-1zM33 3h1v1h-1zM36 3h1v1h-1zM41 3h1v1h-1zM43 3h1v1h-1zM2 4h1v1h-1zM6 4h1v1h-1zM8 4h1v1h-1zM10 4h1v1h-1zM12 4h1v1h-1zM14 4h1v1h-1zM16 4h1v1h-1zM19 4h1v1h-1zM33 4h1v1h-1zM35 4h1v1h-1zM38 4h1v1h-1zM40 4h1v1h-1zM42 4h1v1h-1zM45 4h1v1h-1zM47 4h1v1h-1zM0 5h1v1h-1zM3 5h1v1h-1zM5 5h1v1h-1zM7 5h1v1h-1zM11 5h1v1h-1zM15 5h1v1h-1zM18 5h1v1h-1zM21 5h1v1h-1zM23 5h1v1h-1zM25 5h1v1h-1zM27 5h1v1h-1zM29 5h1v1h-1zM31 5h1v1h-1zM33 5h1v1h-1zM37 5h1v1h-1zM39 5h1v1h-1zM44 5h1v1h-1zM2 6h1v1h-1zM8 6h1v1h-1zM12 6h1v1h-1zM14 6h1v1h-1zM17 6h1v1h-1zM22 6h1v1h-1zM25 6h1v1h-1zM28 6h1v1h-1zM32 6h1v1h-1zM36 6h1v1h-1zM40 6h1v1h-1zM43 6h1v1h-1zM46 6h1v1h-1zM1 7h1v1h-1zM4 7h1v1h-1zM7 7h1v1h-1zM9 7h1v1h-1zM11 7h1v1h-1zM13 7h1v1h-1zM16 7h1v1h-1zM19 7h1v1h-1zM21 7h1v1h-1zM23 7h1v1h-1zM26 7h1v1h-1zM29 7h1v1h-1zM31 7h1v1h-1zM35 7h1v1h-1zM37 7h1v1h-1zM42 7h1v1h-1zM45 7h1v1h-1zM3 8h1v1h-1zM5 8h1v1h-1zM10 8h1v1h-1zM14 8h1v1h-1zM20 8h1v1h-1zM25 8h1v1h-1zM30 8h1v1h-1zM32 8h1v1h-1zM34 8h1v1h-1zM38 8h1v1h-1zM40 8h1v1h-1zM44 8h1v1h-1zM47 8h1v1h-1zM2 9h1v1h-1zM5 9h1v1h-1zM7 9h1v1h-1zM9 9h1v1h-1zM12 9h1v1h-1zM15 9h1v1h-1zM17 9h1v1h-1zM19 9h1v1h-1zM22 9h1v1h-1zM24 9h1v1h-1zM28 9h1v1h-1zM37 9h1v1h-1zM40 9h1v1h-1zM43 9h1v1h-1zM0 10h1v1h-1zM3 10h1v1h-1zM8 10h1v1h-1zM11 10h1v1h-1zM16 10h1v1h-1zM19 10h1v1h-1zM25 10h1v1h-1zM27 10h1v1h-1zM29 10h1v1h-1zM32 10h1v1h-1zM34 10h1v1h-1zM36 10h1v1h-1zM39 10h1v1h-1zM42 10h1v1h-1zM44 10h1v1h-1zM46 10h1v1h-1zM2 11h1v1h-1zM5 11h1v1h-1zM7 11h1v1h-1zM10 11h1v1h-1zM13 11h1v1h-1zM15 11h1v1h-1zM18 11h1v1h-1zM22 11h1v1h-1zM24 11h1v1h-1zM26 11h1v1h-1zM29 11h1v1h-1zM31 11h1v1h-1zM34 11h1v1h-1zM37 11h1v1h-1zM40 11h1v1h-1zM42 11h1v1h-1zM0 12h1v1h-1zM3 12h1v1h-1zM6 12h1v1h-1zM9 12h1v1h-1zM11 12h1v1h-1zM14 12h1v1h-1zM17 12h1v1h-1zM19 12h1v1h-1zM21 12h1v1h-1zM24 12h1v1h-1zM27 12h1v1h-1zM30 12h1v1h-1zM33 12h1v1h-1zM36 12h1v1h-1zM44 12h1v1h-1zM46 12h1v1h-1zM4 13h1v1h-1zM7 13h1v1h-1zM9 13h1v1h-1zM12 13h1v1h-1zM15 13h1v1h-1zM20 13h1v1h-1zM23 13h1v1h-1zM26 13h1v1h-1zM29 13h1v1h-1zM32 13h1v1h-1zM34 13h1v1h-1zM37 13h1v1h-1zM39 13h1v1h-1zM41 13h1v1h-1zM44 13h1v1h-1zM1 14h1v1h-1zM3 14h1v1h-1zM5 14h1v1h-1zM13 14h1v1h-1zM18 14h1v1h-1zM21 14h1v1h-1zM26 14h1v1h-1zM28 14h1v1h-1zM31 14h1v1h-1zM36 14h1v1h-1zM39 14h1v1h-1zM42 14h1v1h-1zM45 14h1v1h-1zM47 14h1v1h-1zM6 15h1v1h-1zM8 15h1v1h-1zM10 15h1v1h-1zM12 15h1v1h-1zM15 15h1v1h-1zM17 15h1v1h-1zM20 15h1v1h-1zM23 15h1v1h-1zM25 15h1v1h-1zM32 15h1v1h-1zM34 15h1v1h-1zM37 15h1v1h-1zM40 15h1v1h-1zM42 15h1v1h-1zM44 15h1v1h-1zM1 16h1v1h-1zM3 16h1v1h-1zM5 16h1v1h-1zM10 16h1v1h-1zM13 16h1v1h-1zM18 16h1v1h-1zM21 16h1v1h-1zM24 16h1v1h-1zM26 16h1v1h-1zM29 16h1v1h-1zM32 16h1v1h-1zM35 16h1v1h-1zM38 16h1v1h-1zM41 16h1v1h-1zM45 16h1v1h-1zM47 16h1v1h-1zM3 17h1v1h-1zM8 17h1v1h-1zM11 17h1v1h-1zM15 17h2v1h-2zM18 17h1v1h-1zM20 17h1v1h-1zM22 17h1v1h-1zM24 17h1v1h-1zM28 17h1v1h-1zM31 17h1v1h-1zM34 17h1v1h-1zM36 17h1v1h-1zM39 17h1v1h-1zM42 17h1v1h-1zM44 17h1v1h-1zM46 17h1v1h-1zM1 18h1v1h-1zM4 18h1v1h-1zM6 18h1v1h-1zM9 18h1v1h-1zM12 18h1v1h-1zM17 18h1v1h-1zM20 18h1v1h-1zM23 18h1v1h-1zM26 18h1v1h-1zM29 18h1v1h-1zM33 18h1v1h-1zM41 18h1v1h-1zM44 18h1v1h-1zM0 19h1v1h-1zM4 19h1v1h-1zM7 19h1v1h-1zM11 19h1v1h-1zM14 19h2v1h-2zM18 19h1v1h-1zM22 19h1v1h-1zM25 19h1v1h-1zM28 19h1v1h-1zM30 19h1v1h-1zM32 19h1v1h-1zM35 19h1v1h-1zM37 19h1v1h-1zM39 19h1v1h-1zM46 19h1v1h-1zM3 20h1v1h-1zM8 20h1v1h-1zM11 20h1v1h-1zM13 20h1v1h-1zM18 20h1v1h-1zM21 20h1v1h-1zM24 20h1v1h-1zM26 20h1v1h-1zM31 20h1v1h-1zM36 20h1v1h-1zM40 20h1v1h-1zM42 20h1v1h-1zM44 20h1v1h-1zM0 21h1v1h-1zM2 21h1v1h-1zM6 21h1v1h-1zM9 21h1v1h-1zM15 21h1v1h-1zM17 21h1v1h-1zM20 21h1v1h-1zM24 21h1v1h-1zM28 21h1v1h-1zM30 21h1v1h-1zM33 21h1v1h-1zM37 21h1v1h-1zM39 21h1v1h-1zM41 21h1v1h-1zM45 21h1v1h-1zM47 21h1v1h-1zM3 22h1v1h-1zM5 22h1v1h-1zM7 22h1v1h-1zM10 22h1v1h-1zM12 22h1v1h-1zM14 22h1v1h-1zM18 22h1v1h-1zM21 22h1v1h-1zM25 22h1v1h-1zM27 22h1v1h-1zM32 22h1v1h-1zM35 22h1v1h-1zM38 22h1v1h-1zM41 22h1v1h-1zM43 22h1v1h-1zM1 23h1v1h-1zM4 23h1v1h-1zM8 23h1v1h-1zM12 23h1v1h-1zM16 23h1v1h-1zM18 23h1v1h-1zM20 23h1v1h-1zM24 23h1v1h-1zM26 23h1v1h-1zM29 23h1v1h-1zM31 23h1v1h-1zM34 23h1v1h-1zM37 23h1v1h-1zM40 23h1v1h-1zM45 23h1v1h-1zM3 24h1v1h-1zM6 24h1v1h-1zM11 24h1v1h-1zM14 24h1v1h-1zM21 24h1v1h-1zM25 24h1v1h-1zM27 24h1v1h-1zM29 24h1v1h-1zM32 24h1v1h-1zM35 24h1v1h-1zM40 24h1v1h-1zM42 24h1v1h-1zM44 24h1v1h-1zM46 24h1v1h-1zM0 25h1v1h-1zM2 25h1v1h-1zM7 25h1v1h-1zM10 25h1v1h-1zM13 25h1v1h-1zM15 25h1v1h-1zM17 25h1v1h-1zM19 25h1v1h-1zM21 25h1v1h-1zM23 25h1v1h-1zM25 25h1v1h-1zM30 25h1v1h-1zM32 25h1v1h-1zM34 25h1v1h-1zM36 25h1v1h-1zM38 25h1v1h-1zM41 25h1v1h-1zM3 26h1v1h-1zM5 26h1v1h-1zM8 26h1v1h-1zM11 26h1v1h-1zM18 26h1v1h-1zM22 26h1v1h-1zM27 26h1v1h-1zM39 26h1v1h-1zM42 26h1v1h-1zM44 26h2v1h-2zM47 26h1v1h-1zM0 27h1v1h-1zM3 27h1v1h-1zM6 27h1v1h-1zM8 27h1v1h-1zM10 27h1v1h-1zM13 27h1v1h-1zM15 27h1v1h-1zM17 27h1v1h-1zM20 27h1v1h-1zM23 27h1v1h-1zM26 27h1v1h-1zM28 27h1v1h-1zM30 27h2v1h-2zM33 27h1v1h-1zM35 27h1v1h-1zM37 27h1v1h-1zM41 27h1v1h-1zM43 27h1v1h-1zM4 28h1v1h-1zM11 28h1v1h-1zM14 28h1v1h-1zM18 28h1v1h-1zM22 28h1v1h-1zM25 28h1v1h-1zM28 28h1v1h-1zM32 28h1v1h-1zM37 28h1v1h-1zM39 28h1v1h-1zM43 28h1v1h-1zM45 28h1v1h-1zM47 28h1v1h-1zM1 29h1v1h-1zM3 29h1v1h-1zM6 29h1v1h-1zM8 29h1v1h-1zM10 29h1v1h-1zM13 29h1v1h-1zM16 29h1v1h-1zM18 29h1v1h-1zM20 29h1v1h-1zM23 29h1v1h-1zM25 29h1v1h-1zM30 29h1v1h-1zM34 29h1v1h-1zM36 29h1v1h-1zM40 29h1v1h-1zM42 29h1v1h-1zM3 30h1v1h-1zM5 30h1v1h-1zM7 30h1v1h-1zM11 30h1v1h-1zM14 30h1v1h-1zM21 30h1v1h-1zM26 30h1v1h-1zM28 30h1v1h-1zM32 30h1v1h-1zM37 30h1v1h-1zM39 30h1v1h-1zM42 30h1v1h-1zM44 30h1v1h-1zM46 30h1v1h-1zM0 31h1v1h-1zM2 31h1v1h-1zM4 31h1v1h-1zM8 31h1v1h-1zM10 31h1v1h-1zM13 31h1v1h-1zM16 31h1v1h-1zM18 31h1v1h-1zM20 31h1v1h-1zM23 31h1v1h-1zM25 31h1v1h-1zM29 31h1v1h-1zM31 31h1v1h-1zM33 31h1v1h-1zM35 31h1v1h-1zM40 31h1v1h-1zM45 31h1v1h-1zM4 32h1v1h-1zM6 32h1v1h-1zM11 32h1v1h-1zM15 32h1v1h-1zM18 32h1v1h-1zM21 32h1v1h-1zM23 32h1v1h-1zM27 32h1v1h-1zM29 32h1v1h-1zM34 32h1v1h-1zM37 32h1v1h-1zM39 32h1v1h-1zM42 32h1v1h-1zM44 32h1v1h-1zM47 32h1v1h-1zM1 33h1v1h-1zM3 33h1v1h-1zM8 33h1v1h-1zM10 33h1v1h-1zM13 33h1v1h-1zM16 33h1v1h-1zM19 33h1v1h-1zM24 33h1v1h-1zM26 33h1v1h-1zM28 33h1v1h-1zM31 33h1v1h-1zM33 33h1v1h-1zM36 33h1v1h-1zM43 33h1v1h-1zM5 34h1v1h-1zM7 34h1v1h-1zM11 34h1v1h-1zM13 34h1v1h-1zM15 34h1v1h-1zM18 34h1v1h-1zM21 34h1v1h-1zM23 34h1v1h-1zM26 34h1v1h-1zM32 34h1v1h-1zM37 34h1v1h-1zM39 34h1v1h-1zM41 34h1v1h-1zM44 34h1v1h-1zM46 34h1v1h-1zM0 35h1v1h-1zM3 35h1v1h-1zM5 35h1v1h-1zM9 35h1v1h-1zM12 35h1v1h-1zM17 35h1v1h-1zM19 35h1v1h-1zM22 35h1v1h-1zM25 35h1v1h-1zM28 35h1v1h-1zM30 35h1v1h-1zM33 35h1v1h-1zM35 35h1v1h-1zM37 35h1v1h-1zM40 35h1v1h-1zM4 36h1v1h-1zM7 36h1v1h-1zM11 36h1v1h-1zM14 36h1v1h-1zM19 36h1v1h-1zM21 36h1v1h-1zM26 36h1v1h-1zM29 36h1v1h-1zM32 36h1v1h-1zM35 36h1v1h-1zM38 36h1v1h-1zM41 36h1v1h-1zM43 36h1v1h-1zM46 36h1v1h-1zM0 37h1v1h-1zM3 37h1v1h-1zM8 37h1v1h-1zM10 37h1v1h-1zM13 37h1v1h-1zM16 37h1v1h-1zM18 37h1v1h-1zM24 37h1v1h-1zM28 37h1v1h-1zM34 37h1v1h-1zM37 37h1v1h-1zM39 37h1v1h-1zM42 37h1v1h-1zM45 37h1v1h-1zM1 38h1v1h-1zM3 38h1v1h-1zM5 38h1v1h-1zM7 38h1v1h-1zM11 38h1v1h-1zM14 38h1v1h-1zM17 38h1v1h-1zM20 38h1v1h-1zM22 38h1v1h-1zM24 38h1v1h-1zM27 38h1v1h-1zM30 38h1v1h-1zM32 38h1v1h-1zM35 38h1v1h-1zM40 38h1v1h-1zM43 38h1v1h-1zM46 38h1v1h-1zM0 39h1v1h-1zM3 39h1v1h-1zM6 39h1v1h-1zM9 39h1v1h-1zM13 39h1v1h-1zM16 39h1v1h-1zM19 39h1v1h-1zM26 39h1v1h-1zM30 39h1v1h-1zM36 39h1v1h-1zM38 39h1v1h-1zM40 39h1v1h-1zM42 39h1v1h-1zM44 39h1v1h-1zM4 40h1v1h-1zM9 40h1v1h-1zM12 40h1v1h-1zM14 40h1v1h-1zM17 40h1v1h-1zM20 40h1v1h-1zM22 40h1v1h-1zM24 40h1v1h-1zM28 40h1v1h-1zM31 40h1v1h-1zM34 40h1v1h-1zM39 40h1v1h-1zM43 40h1v1h-1zM45 40h1v1h-1zM47 40h1v1h-1zM2 41h1v1h-1zM5 41h1v1h-1zM7 41h1v1h-1zM10 41h1v1h-1zM12 41h1v1h-1zM16 41h1v1h-1zM19 41h1v1h-1zM21 41h1v1h-1zM25 41h1v1h-1zM27 41h1v1h-1zM30 41h1v1h-1zM32 41h1v1h-1zM35 41h1v1h-1zM37 41h1v1h-1zM40 41h1v1h-1zM42 41h1v1h-1zM0 42h1v1h-1zM2 42h1v1h-1zM4 42h1v1h-1zM7 42h1v1h-1zM9 42h1v1h-1zM14 42h1v1h-1zM18 42h1v1h-1zM23 42h1v1h-1zM26 42h1v1h-1zM29 42h1v1h-1zM33 42h1v1h-1zM37 42h1v1h-1zM41 42h1v1h-1zM43 42h1v1h-1zM45 42h1v1h-1zM47 42h1v1h-1zM6 43h1v1h-1zM10 43h1v1h-1zM12 43h1v1h-1zM15 43h1v1h-1zM17 43h1v1h-1zM20 43h1v1h-1zM22 43h1v1h-1zM24 43h1v1h-1zM28 43h1v1h-1zM31 43h1v1h-1zM34 43h1v1h-1zM36 43h1v1h-1zM39 43h1v1h-1zM1 44h1v1h-1zM3 44h1v1h-1zM5 44h1v1h-1zM8 44h1v1h-1zM14 44h1v1h-1zM18 44h1v1h-1zM22 44h1v1h-1zM25 44h1v1h-1zM27 44h1v1h-1zM30 44h1v1h-1zM34 44h1v1h-1zM37 44h1v1h-1zM41 44h1v1h-1zM43 44h1v1h-1zM45 44h1v1h-1zM1 45h1v1h-1zM4 45h1v1h-1zM10 45h1v1h-1zM12 45h1v1h-1zM15 45h1v1h-1zM17 45h1v1h-1zM19 45h1v1h-1zM21 45h1v1h-1zM24 45h1v1h-1zM28 45h1v1h-1zM31 45h1v1h-1zM33 45h1v1h-1zM38 45h1v1h-1zM40 45h1v1h-1zM42 45h1v1h-1zM4 46h1v1h-1zM6 46h2v1h-2zM9 46h1v1h-1zM12 46h1v1h-1zM14 46h1v1h-1zM18 46h1v1h-1zM22 46h1v1h-1zM25 46h1v1h-1zM29 46h1v1h-1zM32 46h1v1h-1zM35 46h1v1h-1zM39 46h1v1h-1zM44 46h1v1h-1zM46 46h1v1h-1zM0 47h1v1h-1zM2 47h1v1h-1zM8 47h1v1h-1zM11 47h1v1h-1zM16 47h1v1h-1zM21 47h1v1h-1zM26 47h1v1h-1zM28 47h1v1h-1zM34 47h1v1h-1zM36 47h1v1h-1zM38 47h1v1h-1zM40 47h1v1h-1zM42 47h1v1h-1zM45 47h1v1h-1z" fill="#efe6c4"/></pattern></defs>
<rect x="0" y="29" width="1318" height="132" fill="url(#dz)"/>
<rect x="0" y="835" width="1318" height="22" fill="url(#dz)"/>
<rect x="0" y="135" width="217" height="26" fill="url(#dz2)"/>
</svg>
<div id="titlebar" class="abs"></div>
<div id="title" class="t">192.168.10.100 - root@AlmaLinux9:~ - Xshell 7 (Free for Home/School)</div>
<div class="t menu" style="left:19px">文件(F)</div>
<div class="t menu" style="left:72px">编辑(E)</div>
<div class="t menu" style="left:126px">查看(V)</div>
<div class="t menu" style="left:181px">工具(T)</div>
<div class="t menu" style="left:235px">选项卡(B)</div>
<div class="t menu" style="left:302px">窗口(W)</div>
<div class="t menu" style="left:361px">帮助(H)</div>
<div id="addr" class="abs"></div>
<div id="addrtext" class="t">ssh://root:******@192.168.10.100:22</div>
<div id="hint" class="t">要添加当前会话，点击左侧的箭头按钮。</div>
<div id="smbody" class="abs"></div>
<div id="smtitle" class="t">会话管理器</div>
<div class="t tree" style="left:42px;top:188px">所有会话</div>
<div class="t tree" style="left:61px;top:208px">01 基础阶段</div>
<div class="t tree" style="left:80px;top:228px">192.168.10.100</div>
<div class="t tree" style="left:80px;top:248px">192.168.10.120</div>
<div class="t tree" style="left:80px;top:268px">192.168.10.130</div>
<div class="t tree" style="left:61px;top:288px">公有云</div>
<div class="abs" style="left:0;top:633px;width:217px;height:1px;background:repeating-linear-gradient(90deg,#e6e2d4 0 1px,transparent 1px 3px)"></div>
<div class="abs pl" style="left:108px;top:634px;width:1px;height:201px"></div>
<div class="t pk" style="top:639px">名称</div>
<div class="t pv" style="top:639px">192.168.10.100</div>
<div class="abs pl" style="left:0;top:655px;width:217px;height:1px"></div>
<div class="t pk" style="top:660px">主机</div>
<div class="t pv" style="top:660px">192.168.10.100</div>
<div class="abs pl" style="left:0;top:676px;width:217px;height:1px"></div>
<div class="t pk" style="top:681px">端口</div>
<div class="t pv" style="top:681px">22</div>
<div class="abs pl" style="left:0;top:697px;width:217px;height:1px"></div>
<div class="t pk" style="top:702px">协议</div>
<div class="t pv" style="top:702px">SSH</div>
<div class="abs pl" style="left:0;top:718px;width:217px;height:1px"></div>
<div class="t pk" style="top:723px">用户名</div>
<div class="t pv" style="top:723px">root</div>
<div class="abs pl" style="left:0;top:739px;width:217px;height:1px"></div>
<div class="t pk" style="top:744px">说明</div>
<div class="abs pl" style="left:0;top:760px;width:217px;height:1px"></div>
<div id="term" class="abs"></div><div id="scroll" class="abs"></div>
<div id="tab" class="abs"></div><div id="tabline" class="abs"></div>
<div id="tabtxt" class="t"><u>1</u> 192.168.10.100</div>
<div id="plus" class="abs"></div>
<div id="prompt" class="t">[root@AlmaLinux9 ~]#</div><div id="cursor" class="abs"></div>
<div class="t st" style="left:5px;font-size:11.300px;top:841.500px">ssh://root@192.168.10.100:22</div>
<div class="t st" style="left:884px;color:#000">SSH2</div>
<div class="t st" style="left:940px;color:#000">xterm</div>
<div class="t st" style="left:1008px;color:#000">153x41</div>
<div class="t st" style="left:1074px;color:#000">1,22</div>
<div class="t st" style="left:1130px;color:#000">1 会话</div>
<div class="t st" style="left:1241px;color:#9a9a9a">CAP</div>
<div class="t st" style="left:1273px;color:#000">NUM</div>
<svg class="abs" style="left:7px;top:4px" width="17" height="16" viewBox="0 0 17 16"><g transform="translate(0,.7) scale(.96)"><path d="M.2 6H4.800C4.800 9.300 7.400 11.900 10.800 11.900C13.500 11.900 15.500 10.300 16.300 8C15.900 11.600 13 14.800 9.200 14.800C4.200 14.800 .5 11 .2 6z" fill="#ec3a2c"/><circle cx="10.800" cy="5.700" r="5.150" fill="#ec3a2c"/><path d="M14.800 3.300l1.700.8-.100 2.800-1.800-.300z" fill="#ec3a2c"/><path d="M13.300 6.500A2.600 2.600 0 1 0 10.900 8.400" fill="none" stroke="#f9b6ae" stroke-width=".75"/><path d="M12 5.900A1.200 1.200 0 1 0 10.800 7" fill="none" stroke="#f39a90" stroke-width=".5"/></g></svg>
<svg class="abs" style="left:1199px;top:7px" width="102" height="12" viewBox="0 0 102 12"><path d="M.5 5.500h10" stroke="#5f5f5f" stroke-width="1" fill="none"/><rect x="45.500" y=".5" width="9" height="9" rx="1" fill="none" stroke="#5f5f5f"/><path d="M91 .5l10 10M101 .5l-10 10" stroke="#5f5f5f" stroke-width="1.100" fill="none"/></svg>
<div class="abs" style="left:0;top:0;width:1.500px;height:1.500px;background:#666;border-radius:0 0 1.500px 0"></div>
<svg class="abs" style="left:3px;top:29px" width="2" height="106" viewBox="0 0 2 106"><rect x=".5" y="0" width="1.500" height="2" fill="#b6b6be"/><rect x=".5" y="4" width="1.500" height="2" fill="#b6b6be"/><rect x=".5" y="8" width="1.500" height="2" fill="#b6b6be"/><rect x=".5" y="12" width="1.500" height="2" fill="#b6b6be"/><rect x=".5" y="16" width="1.500" height="2" fill="#b6b6be"/><rect x=".5" y="20" width="1.500" height="2" fill="#b6b6be"/><rect x=".5" y="24" width="1.500" height="2" fill="#b6b6be"/><rect x=".5" y="28" width="1.500" height="2" fill="#b6b6be"/><rect x=".5" y="32" width="1.500" height="2" fill="#b6b6be"/><rect x=".5" y="36" width="1.500" height="2" fill="#b6b6be"/><rect x=".5" y="40" width="1.500" height="2" fill="#b6b6be"/><rect x=".5" y="44" width="1.500" height="2" fill="#b6b6be"/><rect x=".5" y="48" width="1.500" height="2" fill="#b6b6be"/><rect x=".5" y="52" width="1.500" height="2" fill="#b6b6be"/><rect x=".5" y="56" width="1.500" height="2" fill="#b6b6be"/><rect x=".5" y="60" width="1.500" height="2" fill="#b6b6be"/><rect x=".5" y="64" width="1.500" height="2" fill="#b6b6be"/><rect x=".5" y="68" width="1.500" height="2" fill="#b6b6be"/><rect x=".5" y="72" width="1.500" height="2" fill="#b6b6be"/><rect x=".5" y="76" width="1.500" height="2" fill="#b6b6be"/><rect x=".5" y="80" width="1.500" height="2" fill="#b6b6be"/><rect x=".5" y="84" width="1.500" height="2" fill="#b6b6be"/><rect x=".5" y="88" width="1.500" height="2" fill="#b6b6be"/><rect x=".5" y="92" width="1.500" height="2" fill="#b6b6be"/><rect x=".5" y="96" width="1.500" height="2" fill="#b6b6be"/><rect x=".5" y="100" width="1.500" height="2" fill="#b6b6be"/><rect x=".5" y="104" width="1.500" height="2" fill="#b6b6be"/></svg>
<svg class="abs" style="left:0px;top:0px" width="1318" height="160" viewBox="0 0 1318 160" style="pointer-events:none"><path d="M1308.5 71.0h6l-3 3z" fill="#000"/><path d="M1302.5 92.5h6l-3 3z" fill="#000"/><path d="M1306.5 146.0h6l-3 3z" fill="#000"/><path d="M1275 143v7l-4.500-3.500z" fill="#bcbcc8"/><path d="M1285 143v7l4.500-3.500z" fill="#bcbcc8"/></svg>
<svg class="abs" style="left:18px;top:88px" width="11" height="12" viewBox="0 0 11 12"><path d="M2.700 5V4a2.600 2.600 0 0 1 5.200 0V5" fill="none" stroke="#f0c48c" stroke-width="1.500"/><rect x=".3" y="4.500" width="9.800" height="6.400" rx="1" fill="#f0c48c"/><path d="M2 6.800h6.500M2 8.800h6.500" stroke="#f8dcb4" stroke-width=".9"/></svg>
<svg class="abs" style="left:18px;top:116px" width="13" height="14" viewBox="0 0 13 14"><path d="M0 0h8v5.500l-4.500 2l-3.500 4.500z" fill="#e23a3a"/><path d="M4 10.500l0-4.300h4v-2.500l4.700 4.600l-4.700 4.600v-2.400z" fill="#4a8ad8"/></svg>
<svg class="abs" style="left:185px;top:143px" width="8" height="10" viewBox="0 0 8 10"><rect x="2" y="1.500" width="4" height="5" fill="#fff" stroke="#000" stroke-width="1"/><path d="M5.500 1.500v5" stroke="#000" stroke-width="1.600"/><path d="M.3 6.500h7.400" stroke="#000" stroke-width="1.400"/><path d="M3.800 7v2.300" stroke="#000" stroke-width="1.200"/></svg>
<svg class="abs" style="left:202px;top:143px" width="10" height="10" viewBox="0 0 10 10"><path d="M1.200 1.500l7.500 6.600M8.700 1.500l-7.500 6.600" stroke="#000" stroke-width="1.600" fill="none"/></svg>
<svg class="abs" style="left:202px;top:165px" width="13" height="13" viewBox="0 0 13 13"><circle cx="5" cy="5" r="4" fill="#f4f4f4" stroke="#b9b9b9" stroke-width="1.300"/><path d="M8 8l4 4" stroke="#e0bf8c" stroke-width="1.800"/></svg>
<div class="abs" style="left:0;top:183px;width:217px;height:1px;background:repeating-linear-gradient(90deg,#ece6cc 0 1px,transparent 1px 3px)"></div>
<div class="abs" style="left:235px;top:143px;width:8px;height:8px;border-radius:50%;background:#0ec40e"></div>
<svg class="abs" style="left:354px;top:143px" width="7" height="7" viewBox="0 0 7 7"><path d="M.9 .9l5.200 5.200M6.100 .9l-5.200 5.200" stroke="#cfe4f8" stroke-width="1" fill="none"/></svg>
<svg class="abs" style="left:375px;top:142px" width="10" height="10" viewBox="0 0 10 10"><path d="M5 1v8M1 5h8" stroke="#3c3c3c" stroke-width="1.800" fill="none"/></svg>
<div class="abs" style="left:29px;top:202px;width:1px;height:88px;background:repeating-linear-gradient(180deg,#9a9a9a 0 1px,transparent 1px 2px)"></div><div class="abs" style="left:48px;top:224px;width:1px;height:51px;background:repeating-linear-gradient(180deg,#9a9a9a 0 1px,transparent 1px 2px)"></div><div class="abs" style="left:15px;top:194px;width:6px;height:1px;background:repeating-linear-gradient(90deg,#9a9a9a 0 1px,transparent 1px 2px)"></div><div class="abs" style="left:34px;top:214px;width:6px;height:1px;background:repeating-linear-gradient(90deg,#9a9a9a 0 1px,transparent 1px 2px)"></div><div class="abs" style="left:49px;top:234px;width:11px;height:1px;background:repeating-linear-gradient(90deg,#9a9a9a 0 1px,transparent 1px 2px)"></div><div class="abs" style="left:49px;top:254px;width:11px;height:1px;background:repeating-linear-gradient(90deg,#9a9a9a 0 1px,transparent 1px 2px)"></div><div class="abs" style="left:49px;top:274px;width:11px;height:1px;background:repeating-linear-gradient(90deg,#9a9a9a 0 1px,transparent 1px 2px)"></div><div class="abs" style="left:34px;top:294px;width:6px;height:1px;background:repeating-linear-gradient(90deg,#9a9a9a 0 1px,transparent 1px 2px)"></div>
<svg class="abs" style="left:6px;top:190px" width="9" height="9" viewBox="0 0 9 9"><rect x=".5" y=".5" width="8" height="8" rx="1.500" fill="#fbfbfd" stroke="#8d929c"/><path d="M2.500 4.500h4" stroke="#3f5fc0" stroke-width="1"/></svg><svg class="abs" style="left:25px;top:210px" width="9" height="9" viewBox="0 0 9 9"><rect x=".5" y=".5" width="8" height="8" rx="1.500" fill="#fbfbfd" stroke="#8d929c"/><path d="M2.500 4.500h4" stroke="#3f5fc0" stroke-width="1"/></svg><svg class="abs" style="left:25px;top:290px" width="9" height="9" viewBox="0 0 9 9"><rect x=".5" y=".5" width="8" height="8" rx="1.500" fill="#fbfbfd" stroke="#8d929c"/><path d="M2.500 4.500h4" stroke="#3f5fc0" stroke-width="1"/><path d="M4.500 2.500v4" stroke="#3f5fc0" stroke-width="1"/></svg>
<svg class="abs" style="left:21px;top:186px" width="18" height="16" viewBox="0 0 18 16"><path d="M.5 1.500q0-1 1-1h4.200l1.500 1.500h7.300q1 0 1 1v1.500h-15z" fill="#f5b300"/><rect x=".5" y="3.200" width="15" height="9.800" rx="1" fill="#f6d877"/><rect x=".5" y="3.200" width="15" height="2.500" rx="1" fill="#f9e08a"/><g transform="translate(11.700,10.800)"><g fill="#6aaa3a"><circle cx="0" cy="0" r="3.200"/><rect x="-1" y="-4.600" width="2" height="2.200" transform="rotate(0)"/><rect x="-1" y="-4.600" width="2" height="2.200" transform="rotate(45)"/><rect x="-1" y="-4.600" width="2" height="2.200" transform="rotate(90)"/><rect x="-1" y="-4.600" width="2" height="2.200" transform="rotate(135)"/><rect x="-1" y="-4.600" width="2" height="2.200" transform="rotate(180)"/><rect x="-1" y="-4.600" width="2" height="2.200" transform="rotate(225)"/><rect x="-1" y="-4.600" width="2" height="2.200" transform="rotate(270)"/><rect x="-1" y="-4.600" width="2" height="2.200" transform="rotate(315)"/></g><circle cx="0" cy="0" r="1.200" fill="#e8f0d8"/></g></svg>
<svg class="abs" style="left:40px;top:207px" width="16" height="14" viewBox="0 0 16 14"><path d="M.5 1.500q0-1 1-1h4.200l1.500 1.500h7.300q1 0 1 1v1.500h-15z" fill="#f5b300"/><rect x=".5" y="3.200" width="15" height="9.800" rx="1" fill="#f6d877"/><rect x=".5" y="3.200" width="15" height="2.500" rx="1" fill="#f9e08a"/></svg>
<svg class="abs" style="left:40px;top:287px" width="16" height="14" viewBox="0 0 16 14"><path d="M.5 1.500q0-1 1-1h4.200l1.500 1.500h7.300q1 0 1 1v1.500h-15z" fill="#f5b300"/><rect x=".5" y="3.200" width="15" height="9.800" rx="1" fill="#f6d877"/><rect x=".5" y="3.200" width="15" height="2.500" rx="1" fill="#f9e08a"/></svg>
<svg class="abs" style="left:59px;top:227px" width="17" height="15" viewBox="0 0 17 15"><g transform="scale(.97)"><path d="M.2 6H4.800C4.800 9.300 7.400 11.900 10.800 11.900C13.500 11.900 15.500 10.300 16.300 8C15.900 11.600 13 14.800 9.200 14.800C4.200 14.800 .5 11 .2 6z" fill="#ec3a2c"/><circle cx="10.800" cy="5.700" r="5.150" fill="#ec3a2c"/><path d="M14.800 3.300l1.700.8-.100 2.800-1.800-.300z" fill="#ec3a2c"/><path d="M13.300 6.500A2.600 2.600 0 1 0 10.900 8.400" fill="none" stroke="#f9b6ae" stroke-width=".75"/><path d="M12 5.900A1.200 1.200 0 1 0 10.800 7" fill="none" stroke="#f39a90" stroke-width=".5"/></g></svg>
<svg class="abs" style="left:59px;top:247px" width="17" height="15" viewBox="0 0 17 15"><g transform="scale(.97)"><path d="M.2 6H4.800C4.800 9.300 7.400 11.900 10.800 11.900C13.500 11.900 15.500 10.300 16.300 8C15.900 11.600 13 14.800 9.200 14.800C4.200 14.800 .5 11 .2 6z" fill="#ec3a2c"/><circle cx="10.800" cy="5.700" r="5.150" fill="#ec3a2c"/><path d="M14.800 3.300l1.700.8-.100 2.800-1.800-.300z" fill="#ec3a2c"/><path d="M13.300 6.500A2.600 2.600 0 1 0 10.900 8.400" fill="none" stroke="#f9b6ae" stroke-width=".75"/><path d="M12 5.900A1.200 1.200 0 1 0 10.800 7" fill="none" stroke="#f39a90" stroke-width=".5"/></g></svg>
<svg class="abs" style="left:59px;top:267px" width="17" height="15" viewBox="0 0 17 15"><g transform="scale(.97)"><path d="M.2 6H4.800C4.800 9.300 7.400 11.900 10.800 11.900C13.500 11.900 15.500 10.300 16.300 8C15.900 11.600 13 14.800 9.200 14.800C4.200 14.800 .5 11 .2 6z" fill="#ec3a2c"/><circle cx="10.800" cy="5.700" r="5.150" fill="#ec3a2c"/><path d="M14.800 3.300l1.700.8-.100 2.800-1.800-.300z" fill="#ec3a2c"/><path d="M13.300 6.500A2.600 2.600 0 1 0 10.900 8.400" fill="none" stroke="#f9b6ae" stroke-width=".75"/><path d="M12 5.900A1.200 1.200 0 1 0 10.800 7" fill="none" stroke="#f39a90" stroke-width=".5"/></g></svg>
<svg class="abs" style="left:871px;top:841px" width="11" height="11" viewBox="0 0 11 11"><path d="M2.500 4.500V3.500a3 3 0 0 1 6 0v1" fill="none" stroke="#f0c48c" stroke-width="1.500"/><rect x=".5" y="4" width="10" height="6.500" rx="1" fill="#f0c48c"/></svg>
<svg class="abs" style="left:994px;top:841px" width="11" height="11" viewBox="0 0 11 11"><path d="M2.500 2.500h7M2.500 2.500v7" stroke="#6c6c6c" stroke-width="1.200" fill="none"/><path d="M.5 8l2 2.500l2-2.500zM8 .5l2.500 2l-2.500 2z" fill="#6c6c6c"/></svg>
<svg class="abs" style="left:1061px;top:842px" width="10" height="10" viewBox="0 0 10 10"><path d="M1.500 0v8" stroke="#888" stroke-width="2" stroke-dasharray="1 1"/><path d="M4 8.500h5" stroke="#888" stroke-width="1" stroke-dasharray="1 1"/></svg>
<svg class="abs" style="left:1171px;top:846px" width="6" height="4" viewBox="0 0 6 4"><path d="M0 3.500l3-3l3 3z" fill="#000"/></svg>
<svg class="abs" style="left:1196px;top:841px" width="28" height="11" viewBox="0 0 28 11"><path d="M5 0l5 5h-3v5h-4v-5h-3z" fill="#c4c4c4"/><path d="M21 11l5-5h-3v-5h-4v5h-3z" fill="#c4c4c4"/></svg>
<svg class="abs" style="left:1308px;top:847px" width="10" height="10" viewBox="0 0 10 10"><rect x="7" y="0" width="2" height="2" fill="#b8b8b8"/><rect x="4" y="3" width="2" height="2" fill="#b8b8b8"/><rect x="7" y="3" width="2" height="2" fill="#b8b8b8"/><rect x="1" y="6" width="2" height="2" fill="#b8b8b8"/><rect x="4" y="6" width="2" height="2" fill="#b8b8b8"/><rect x="7" y="6" width="2" height="2" fill="#b8b8b8"/></svg>
<div class="abs" style="left:1309px;top:753px;width:3px;height:66px;background:#8c8c8c"></div>
<svg class="abs" style="left:0px;top:0px" width="640" height="82" viewBox="0 0 640 82"><g transform="translate(15,60)"><rect x=".5" y=".5" width="12" height="11" fill="#f4f6fa" stroke="#9aa4b4"/><rect x="1" y="1" width="11" height="3" fill="#5b9ae0"/><path d="M2 7h9" stroke="#d0d8e4"/><path d="M11 7v8M7 11h8" stroke="#1da51d" stroke-width="2.200"/></g><g transform="translate(39,61)"><path d="M0 1q0-1 1-1h4.500l1.500 1.500h4.500q1 0 1 1v1.500h-13z" fill="#c99a5c"/><path d="M0 12V3h11.500v1.500h4.200l-2.200 7.500z" fill="#d9ae72"/><path d="M4 7h1M7 6h1M10 7h1M5 9.500h1M8 9h1M11 10h1" stroke="#f0d090" stroke-width="1"/></g><path d="M60.5 66.0h6l-3 3z" fill="#000"/><rect x="74.0" y="59" width="1" height="16" fill="#c3c3c7"/><g transform="translate(82,59)"><rect x="1" y="1" width="6" height="6" rx="2.500" fill="none" stroke="#a8a8ac" stroke-width="1.800"/><rect x="9" y="9" width="6" height="6" rx="2.500" fill="none" stroke="#a8a8ac" stroke-width="1.800"/><path d="M5.500 6l2 2.500l-2.500.500zM10.500 10l-2-2.500l2.500-.500z" fill="#e43c3c"/><path d="M9.500 1.500l-1 3M13 4l-3 1.500M6.500 14.500l1-3M3 12l3-1.500" stroke="#e86060" stroke-width="1.200"/></g><g transform="translate(104.5,59)"><rect x="1" y="1" width="8" height="7" rx="3" fill="none" stroke="#c9c9c9" stroke-width="3"/><rect x="8" y="8" width="8" height="7" rx="3" fill="none" stroke="#c9c9c9" stroke-width="3"/><path d="M5 5l7 6" stroke="#c9c9c9" stroke-width="3"/></g><rect x="128.0" y="59" width="1" height="16" fill="#c3c3c7"/><g transform="translate(138,60)"><rect x=".5" y=".5" width="12" height="11" fill="#f4f6fa" stroke="#9aa4b4"/><rect x="1" y="1" width="11" height="3" fill="#5b9ae0"/><g transform="translate(10,10)" fill="#3fa63f"><circle r="3.600"/><rect x="-1.100" y="-5.200" width="2.200" height="2.400" transform="rotate(0)"/><rect x="-1.100" y="-5.200" width="2.200" height="2.400" transform="rotate(45)"/><rect x="-1.100" y="-5.200" width="2.200" height="2.400" transform="rotate(90)"/><rect x="-1.100" y="-5.200" width="2.200" height="2.400" transform="rotate(135)"/><rect x="-1.100" y="-5.200" width="2.200" height="2.400" transform="rotate(180)"/><rect x="-1.100" y="-5.200" width="2.200" height="2.400" transform="rotate(225)"/><rect x="-1.100" y="-5.200" width="2.200" height="2.400" transform="rotate(270)"/><rect x="-1.100" y="-5.200" width="2.200" height="2.400" transform="rotate(315)"/><circle r="1.500" fill="#e8e4e0"/></g></g><path d="M158.5 66.0h6l-3 3z" fill="#000"/><rect x="172.0" y="59" width="1" height="16" fill="#c3c3c7"/><g transform="translate(180,59)"><circle cx="6.500" cy="6.500" r="5.300" fill="#eef0f2" stroke="#b4b4b4" stroke-width="1.800"/><path d="M10.500 10.500l5 5" stroke="#e2b681" stroke-width="2.400" stroke-linecap="round"/></g><rect x="203.0" y="59" width="1" height="16" fill="#c3c3c7"/><g transform="translate(212,59)"><rect x="0" y="3" width="6" height="6" fill="#4a8adc"/><rect x="0" y="10" width="6" height="6" fill="#9a9a9a"/><rect x="7.500" y="10.500" width="5" height="5" fill="#f0f0f0" stroke="#e02020" stroke-width="1.200"/><path d="M8 3.500a4 4 0 0 1 5 3.500" fill="none" stroke="#a4a4a8" stroke-width="1.500"/><path d="M11 7h4.500l-2.200 2.600zM9 1l-2 2.500l3 .8z" fill="#a4a4a8"/></g><path d="M233.8 66.0h6l-3 3z" fill="#000"/><g transform="translate(248,59)"><circle cx="8" cy="8" r="7.900" fill="#4b8edb"/><path d="M2.500 4q1.500-2.300 4-2.200l-.3 2l-1.500 1.200l.8 2.300l-1.700.9l-1.600-2zM10 4.200l3-.7l2.300 3l-.5 3.800l-1.800 1l-1-2.700l-1.800-1.600zM5.500 9.200l3 .3l.8 3l-1.600 2.800l-1.500-2z" fill="#4caf50"/></g><path d="M269.6 66.0h6l-3 3z" fill="#000"/><g transform="translate(284,59)"><g transform="translate(.3,12.300) skewX(-16)"><text x="0" y="0" font-family="Liberation Serif,serif" font-style="italic" font-size="17.500" fill="#a6a6aa">A</text></g><g transform="translate(3.600,15.400) skewX(-16) scale(1.100,1)"><text x="0" y="0" font-family="Liberation Serif,serif" font-style="italic" font-size="18.500" fill="#4a86d8">A</text></g></g><path d="M305.4 66.0h6l-3 3z" fill="#000"/><rect x="319.0" y="59" width="1" height="16" fill="#c3c3c7"/><g transform="translate(326.8,59.5)"><g transform="scale(.98)"><path d="M.2 6H4.800C4.800 9.300 7.400 11.900 10.800 11.900C13.500 11.900 15.500 10.300 16.300 8C15.900 11.600 13 14.800 9.200 14.800C4.200 14.800 .5 11 .2 6z" fill="#ec3a2c"/><circle cx="10.800" cy="5.700" r="5.150" fill="#ec3a2c"/><path d="M14.800 3.300l1.700.8-.100 2.800-1.800-.300z" fill="#ec3a2c"/><path d="M13.300 6.500A2.600 2.600 0 1 0 10.900 8.400" fill="none" stroke="#f9b6ae" stroke-width=".75"/><path d="M12 5.900A1.200 1.200 0 1 0 10.800 7" fill="none" stroke="#f39a90" stroke-width=".5"/></g></g><g transform="translate(350,60.5)"><path d="M0 1q0-1 1-1h5l1.500 1.500h5.500q1 0 1 1v2h2l-2 3.500v4.500h-14z" fill="#5c9a1c"/><circle cx="7" cy="7.300" r="3.600" fill="#fff"/><path d="M7 4.500v5.500M5.500 8.500q0 1.500 1.500 1.500M8.500 6q0-1.500-1.500-1.500" stroke="#5c9a1c" stroke-width="1.100" fill="none"/></g><rect x="373.0" y="59" width="1" height="16" fill="#c3c3c7"/><g transform="translate(382,60)"><g fill="#27a03a"><path d="M0 0h5l-1.700 1.700l2.900 2.900l-1.600 1.600l-2.900-2.900l-1.700 1.700zM14 0v5l-1.700-1.700l-2.900 2.900l-1.600-1.600l2.900-2.900l-1.700-1.700zM0 14v-5l1.700 1.700l2.900-2.900l1.600 1.600l-2.900 2.900l1.700 1.700zM14 14h-5l1.700-1.700l-2.900-2.900l1.600-1.600l2.900 2.900l1.700-1.700z"/></g></g><g transform="translate(406,60)"><path d="M2.500 7V4.500a3.500 3.500 0 0 1 7 0V7" fill="none" stroke="#b4b4b8" stroke-width="2"/><rect x="0" y="6.500" width="12" height="7.500" rx="1" fill="#d8a96c"/><rect x="5" y="8" width="2" height="4" fill="#a8a8b0"/><path d="M8 8.500v4M10 9v3" stroke="#c89860" stroke-width="1"/></g><rect x="427.0" y="59" width="1" height="16" fill="#c3c3c7"/><g transform="translate(435,60)"><path d="M8 0v4" stroke="#60686f" stroke-width="1.200"/><rect x="0" y="3.500" width="16" height="9.500" rx="1.500" fill="#8f9aa6"/><path d="M2 6.500h12M2 8.800h12" stroke="#e4e8ec" stroke-width="1.300" stroke-dasharray="1.600 1"/><path d="M3.500 11h9" stroke="#e4e8ec" stroke-width="1.300"/></g><g transform="translate(459,60)"><path d="M10.500 1l5-1v5z" fill="#e02838"/><path d="M10 1.500l5 4l-5 5.500l-4-3z" fill="#b8bcc4"/><path d="M6 8l4 3l-3 2l-2.500-.500z" fill="#e8b888"/><path d="M0 13.700h11" stroke="#f09868" stroke-width="1.300"/></g><rect x="481.0" y="59" width="1" height="16" fill="#c3c3c7"/><g transform="translate(491,61)"><path d="M0 1q0-1 1-1h4.500l1.500 1.500h6q1 0 1 1v9.500h-14z" fill="#d8a96c"/><path d="M7 4.500v6M4 7.500h6" stroke="#fdf4e4" stroke-width="1.800"/></g><path d="M511.70000000000005 66.0h6l-3 3z" fill="#000"/><g transform="translate(527,60)"><rect x="0" y="0" width="14" height="13" fill="#cfcfcf"/><path d="M7 0v13" stroke="#bcbcbc" stroke-width="1" stroke-dasharray="2 2"/><path d="M0 .5h14" stroke="#c0c0c0" stroke-dasharray="2 1"/></g><path d="M547.5 66.0h6l-3 3z" fill="#8c8c8c"/><rect x="561.0" y="59" width="1" height="16" fill="#c3c3c7"/><g transform="translate(569,58.7)"><circle cx="8" cy="8" r="7.900" fill="#4a86d2"/><text x="8" y="12.300" text-anchor="middle" font-family="Liberation Sans,sans-serif" font-weight="bold" font-size="12" fill="#fff">?</text></g><g transform="translate(592,60.3)"><path d="M0 1q0-1 1-1h14q1 0 1 1v8q0 1-1 1h-8l-3 3.500v-3.500h-3q-1 0-1-1z" fill="#cdcdcd"/><path d="M3 3.500h10M3 6h7" stroke="#c0c0c0" stroke-dasharray="2 1.500"/></g></svg>
<div id="kb" class="abs"></div><div id="kblight" class="abs"></div>
<div id="kbtitle" class="abs"></div><div id="kbtline" class="abs"></div>
<div id="kbname" class="t">屏幕键盘</div>
<div id="kbclose" class="abs"></div>
<svg class="abs" style="left:1244px;top:400px" width="12" height="15" viewBox="0 0 12 15"><path d="M3.5 1.5h5v5l1.5 1.5h-8l1.500-1.500z" fill="#fff" stroke="#222" stroke-width="1"/><path d="M6 8v5.500" stroke="#222" stroke-width="1.600"/><path d="M5 2.500v3.500" stroke="#444" stroke-width="1"/></svg>
<svg class="abs" style="left:1283px;top:403px" width="10" height="9" viewBox="0 0 10 9"><path d="M1.200 1.200l7.600 6.600M8.800 1.200l-7.600 6.600" stroke="#fff" stroke-width="1.800" fill="none"/></svg>
<div class="k" style="left:697px;top:423px;width:33px"><i>Esc</i></div>
<div class="k" style="left:765px;top:423px;width:33px"><svg width="31" height="31" viewBox="0 0 31 31"><defs><radialGradient id="hg" cx=".4" cy=".3" r=".8"><stop offset="0" stop-color="#8fb6ff"/><stop offset=".5" stop-color="#2e62e0"/><stop offset="1" stop-color="#1536a0"/></radialGradient></defs><circle cx="15" cy="15" r="6.700" fill="#fff" stroke="#4a62d0" stroke-width=".9"/><circle cx="15" cy="15" r="5.300" fill="url(#hg)"/><text x="15" y="18.600" font-family="Liberation Sans,sans-serif" font-weight="bold" font-size="10" fill="#fff" text-anchor="middle">?</text></svg></div>
<div class="k" style="left:799px;top:423px;width:33px"><i>F2</i></div>
<div class="k" style="left:833px;top:423px;width:33px"><i>F3</i></div>
<div class="k" style="left:867px;top:423px;width:33px"><i>F4</i></div>
<div class="k" style="left:917px;top:423px;width:33px"><i>F5</i></div>
<div class="k" style="left:951px;top:423px;width:33px"><i>F6</i></div>
<div class="k" style="left:985px;top:423px;width:33px"><i>F7</i></div>
<div class="k" style="left:1019px;top:423px;width:33px"><i>F8</i></div>
<div class="k" style="left:1071px;top:423px;width:33px"><i>F9</i></div>
<div class="k" style="left:1105px;top:423px;width:33px"><svg width="31" height="31" viewBox="0 0 31 31"><rect x="7.500" y="7.500" width="14" height="4" fill="#e8e8ee" stroke="#8a8a8a"/><path d="M9 9.500h3M14 9.500h2M18 9.500h2" stroke="#444" stroke-width="1"/><rect x="9.500" y="11.500" width="7" height="10" fill="#e4e8f4" stroke="#8a8a8a"/><path d="M11 14h2M14 14h1M11 17h2M14 17h1M11 20h2M14 20h1" stroke="#333" stroke-width="1"/></svg></div>
<div class="k" style="left:1139px;top:423px;width:33px"><i>F11</i></div>
<div class="k" style="left:1173px;top:423px;width:33px"><i>F12</i></div>
<div class="k" style="left:1212px;top:423px;width:33px"><svg width="31" height="31" viewBox="0 0 31 31"><rect x="8" y="9.500" width="15" height="11" rx="1.500" fill="#d8dce4" stroke="#3a3a3a" stroke-width="1"/><rect x="9" y="8.500" width="5" height="2" fill="#555"/><rect x="20" y="12" width="2.500" height="6" fill="#111"/><circle cx="14" cy="15.500" r="3.800" fill="#b8c4d8" stroke="#222" stroke-width="1.200"/><circle cx="14" cy="15.500" r="1.600" fill="#1c2c60"/><rect x="18" y="10.500" width="2" height="1.500" fill="#fff"/></svg></div>
<div class="k" style="left:1246px;top:423px;width:33px"><i class="l">Scroll</i></div>
<div class="k" style="left:1280px;top:423px;width:33px"><i class="l">Pause</i></div>
<div class="k" style="left:697px;top:466px;width:33px"><s>~</s><u>`</u></div>
<div class="k" style="left:731px;top:466px;width:33px"><s>!</s><u>1</u></div>
<div class="k" style="left:765px;top:466px;width:33px"><s>@</s><u>2</u></div>
<div class="k" style="left:799px;top:466px;width:33px"><s>#</s><u>3</u></div>
<div class="k" style="left:833px;top:466px;width:33px"><s>$</s><u>4</u></div>
<div class="k" style="left:867px;top:466px;width:33px"><s>%</s><u>5</u></div>
<div class="k" style="left:901px;top:466px;width:33px"><s>^</s><u>6</u></div>
<div class="k" style="left:935px;top:466px;width:33px"><s>&amp;</s><u>7</u></div>
<div class="k" style="left:969px;top:466px;width:33px"><s>*</s><u>8</u></div>
<div class="k" style="left:1003px;top:466px;width:33px"><s>(</s><u>9</u></div>
<div class="k" style="left:1037px;top:466px;width:33px"><s>)</s><u>0</u></div>
<div class="k" style="left:1071px;top:466px;width:33px"><s>_</s><u>-</u></div>
<div class="k" style="left:1105px;top:466px;width:33px"><s>+</s><u>=</u></div>
<div class="k" style="left:1139px;top:466px;width:67px"><svg width="65" height="31" viewBox="0 0 65 31"><path d="M25.0 15l6-5.200v4.200h10v2h-10v4.200z" fill="#2a3450"/></svg></div>
<div class="k" style="left:1212px;top:466px;width:33px"><i>Ins</i></div>
<div class="k" style="left:1246px;top:466px;width:33px"><i class="l">Home</i></div>
<div class="k" style="left:1280px;top:466px;width:33px"><i class="l">PgUp</i></div>
<div class="k" style="left:697px;top:500px;width:50px"><i>Tab</i></div>
<div class="k" style="left:748px;top:500px;width:33px"><b>q</b></div>
<div class="k" style="left:782px;top:500px;width:33px"><b>w</b></div>
<div class="k" style="left:816px;top:500px;width:33px"><b>e</b></div>
<div class="k" style="left:850px;top:500px;width:33px"><b>r</b></div>
<div class="k" style="left:884px;top:500px;width:33px"><b>t</b></div>
<div class="k" style="left:918px;top:500px;width:33px"><b>y</b></div>
<div class="k" style="left:952px;top:500px;width:33px"><b>u</b></div>
<div class="k" style="left:986px;top:500px;width:33px"><b>i</b></div>
<div class="k" style="left:1020px;top:500px;width:33px"><b>o</b></div>
<div class="k" style="left:1054px;top:500px;width:33px"><b>p</b></div>
<div class="k" style="left:1088px;top:500px;width:33px"><s>{</s><u>[</u></div>
<div class="k" style="left:1122px;top:500px;width:33px"><s>}</s><u>]</u></div>
<div class="k" style="left:1156px;top:500px;width:50px"><s>|</s><u>\</u></div>
<div class="k" style="left:1212px;top:500px;width:33px"><i>Del</i></div>
<div class="k" style="left:1246px;top:500px;width:33px"><i>End</i></div>
<div class="k" style="left:1280px;top:500px;width:33px"><i class="l">PgDn</i></div>
<div class="k" style="left:697px;top:534px;width:58px"><i>Caps</i></div>
<div class="k" style="left:756px;top:534px;width:33px"><b>a</b></div>
<div class="k" style="left:790px;top:534px;width:33px"><b>s</b></div>
<div class="k" style="left:824px;top:534px;width:33px"><b>d</b></div>
<div class="k" style="left:858px;top:534px;width:33px"><b>f</b></div>
<div class="k" style="left:892px;top:534px;width:33px"><b>g</b></div>
<div class="k" style="left:926px;top:534px;width:33px"><b>h</b></div>
<div class="k" style="left:960px;top:534px;width:33px"><b>j</b></div>
<div class="k" style="left:994px;top:534px;width:33px"><b>k</b></div>
<div class="k" style="left:1028px;top:534px;width:33px"><b>l</b></div>
<div class="k" style="left:1062px;top:534px;width:33px"><s>:</s><u>;</u></div>
<div class="k" style="left:1096px;top:534px;width:33px"><s>"</s><u>'</u></div>
<div class="k" style="left:1130px;top:534px;width:76px"><i>Enter</i></div>
<div class="k" style="left:697px;top:568px;width:74px"><i>Shift</i></div>
<div class="k" style="left:772px;top:568px;width:33px"><b>z</b></div>
<div class="k" style="left:806px;top:568px;width:33px"><b>x</b></div>
<div class="k" style="left:840px;top:568px;width:33px"><b>c</b></div>
<div class="k" style="left:874px;top:568px;width:33px"><b>v</b></div>
<div class="k" style="left:908px;top:568px;width:33px"><b>b</b></div>
<div class="k" style="left:942px;top:568px;width:33px"><b>n</b></div>
<div class="k" style="left:976px;top:568px;width:33px"><b>m</b></div>
<div class="k" style="left:1010px;top:568px;width:33px"><s>&lt;</s><u>,</u></div>
<div class="k" style="left:1044px;top:568px;width:33px"><s>&gt;</s><u>.</u></div>
<div class="k" style="left:1078px;top:568px;width:33px"><s>?</s><u>/</u></div>
<div class="k" style="left:1112px;top:568px;width:94px"><i>Shift</i></div>
<div class="k" style="left:1246px;top:568px;width:33px"><svg width="31" height="31" viewBox="0 0 31 31"><g transform="rotate(90 15.5 15.500)"><path d="M9.0 15.500l5.500-5v4h7.500v2h-7.500v4z" fill="#2a3450"/></g></svg></div>
<div class="k" style="left:697px;top:602px;width:49px"><i>Ctrl</i></div>
<div class="k" style="left:747px;top:602px;width:41px"><svg width="39" height="31" viewBox="0 0 39 31"><g transform="translate(11.0,7.500)"><path d="M3.200 1.800q2.800-2 5.600-.300l-1.500 5.500q-2.800-1.600-5.600.300z" fill="#e8501c"/><path d="M9.700 2q2.800 1.600 5.800-.400l-1.600 5.600q-2.900 1.900-5.700.300z" fill="#6cb52c"/><path d="M1.400 8.300q2.800-2 5.600-.300l-1.500 5.300q-2.800-1.700-5.600.300z" fill="#1c8ae0"/><path d="M7.900 8.500q2.800 1.600 5.700-.300l-1.500 5.400q-2.900 1.900-5.700.300z" fill="#fcb414"/></g></svg></div>
<div class="k" style="left:789px;top:602px;width:42px"><i>Alt</i></div>
<div class="k" style="left:832px;top:602px;width:195px"></div>
<div class="k" style="left:1028px;top:602px;width:42px"><i>AltGr</i></div>
<div class="k" style="left:1071px;top:602px;width:41px"><svg width="39" height="31" viewBox="0 0 39 31"><g transform="translate(11.0,7.500)"><path d="M3.200 1.800q2.800-2 5.600-.300l-1.500 5.500q-2.800-1.600-5.600.300z" fill="#e8501c"/><path d="M9.700 2q2.800 1.600 5.800-.400l-1.600 5.600q-2.900 1.900-5.700.300z" fill="#6cb52c"/><path d="M1.400 8.300q2.800-2 5.600-.300l-1.500 5.300q-2.800-1.700-5.600.300z" fill="#1c8ae0"/><path d="M7.900 8.500q2.800 1.600 5.700-.300l-1.500 5.400q-2.900 1.900-5.700.300z" fill="#fcb414"/></g></svg></div>
<div class="k" style="left:1113px;top:602px;width:41px"><svg width="39" height="31" viewBox="0.500 0 39 31"><rect x="12" y="9" width="16" height="1.200" fill="#a8d0f0"/><rect x="12" y="10" width="16" height="10" fill="#f0c020" stroke="#4a2a00" stroke-width="1"/><path d="M12.500 13.300h15M12.500 16.600h15M15.500 10.500v6M18.500 10.500v6M21.500 10.500v6M24.500 10.500v6M15.500 16.600v3M24.500 16.600v3" stroke="#8a1800" stroke-width="1.100"/></svg></div>
<div class="k" style="left:1155px;top:602px;width:51px"><i>Ctrl</i></div>
<div class="k" style="left:1212px;top:602px;width:33px"><svg width="31" height="31" viewBox="0 0 31 31"><g transform="rotate(0 15.5 15.500)"><path d="M9.0 15.500l5.500-5v4h7.500v2h-7.500v4z" fill="#2a3450"/></g></svg></div>
<div class="k" style="left:1246px;top:602px;width:33px"><svg width="31" height="31" viewBox="0 0 31 31"><g transform="rotate(270 15.5 15.500)"><path d="M9.0 15.500l5.500-5v4h7.500v2h-7.500v4z" fill="#2a3450"/></g></svg></div>
<div class="k" style="left:1280px;top:602px;width:33px"><svg width="31" height="31" viewBox="0 0 31 31"><g transform="rotate(180 15.5 15.500)"><path d="M9.0 15.500l5.500-5v4h7.500v2h-7.500v4z" fill="#2a3450"/></g></svg></div>
</body></html>
